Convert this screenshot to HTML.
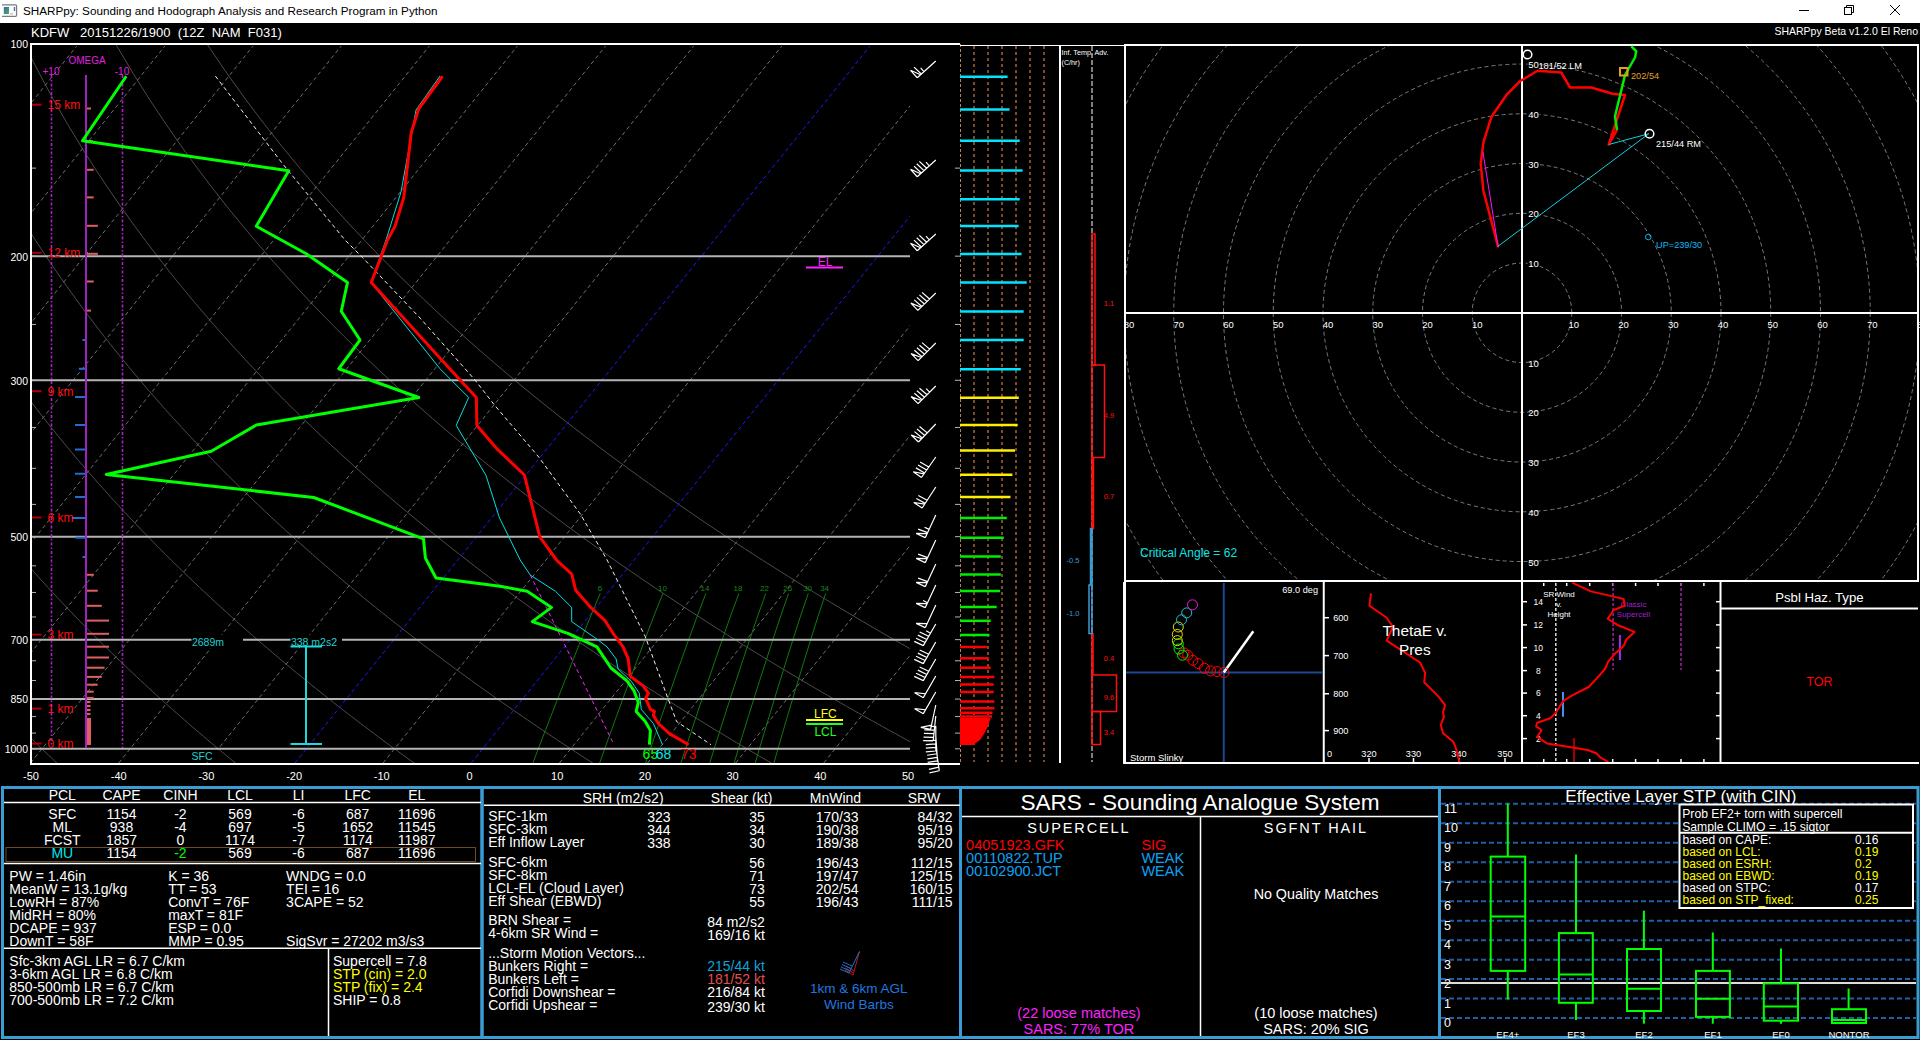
<!DOCTYPE html><html><head><meta charset="utf-8"><style>html,body{margin:0;padding:0;background:#000;overflow:hidden}svg{display:block}text{white-space:pre}</style></head><body><svg width="1920" height="1040" viewBox="0 0 1920 1040" font-family='"Liberation Sans", sans-serif'>
<rect x="0" y="0" width="1920" height="1040" fill="#000" />
<rect x="0" y="0" width="1920" height="23" fill="#ffffff" />
<path d="M16.5,5 V16 M2,4.8 H15.5 Q16.6,4.8 16.6,6 V15.2 Q16.6,16.4 15.5,16.4 H2" fill="none" stroke="#777c82" stroke-width="1.2"/>
<defs><linearGradient id="ig" x1="0" y1="0" x2="1" y2="1"><stop offset="0" stop-color="#3a6aa8"/><stop offset="1" stop-color="#48b060"/></linearGradient></defs>
<rect x="3.8" y="7" width="5.2" height="7" fill="url(#ig)" />
<rect x="10" y="13" width="3" height="1.6" fill="#c8c8c8" />
<rect x="13.8" y="7" width="1.3" height="4" fill="#3a70b0" />
<text x="23" y="15.46" font-size="11.7" fill="#000" text-anchor="start" >SHARPpy: Sounding and Hodograph Analysis and Research Program in Python</text>
<line x1="1799" y1="10.5" x2="1809" y2="10.5" stroke="#000" stroke-width="1" />
<rect x="1844.5" y="7.5" width="7" height="7" fill="none" stroke="#000" stroke-width="1" />
<polyline points="1846.5,7.5 1846.5,5.5 1853.5,5.5 1853.5,12.5 1851.5,12.5" fill="none" stroke="#000" stroke-width="1"/>
<line x1="1890" y1="5" x2="1900" y2="15" stroke="#000" stroke-width="1" />
<line x1="1900" y1="5" x2="1890" y2="15" stroke="#000" stroke-width="1" />
<text x="31" y="36.74" font-size="13" fill="#fff" text-anchor="start" xml:space="preserve">KDFW   20151226/1900  (12Z  NAM  F031)</text>
<text x="1918" y="34.83" font-size="10.5" fill="#fff" text-anchor="end" >SHARPpy Beta v1.2.0 El Reno</text>
<defs><clipPath id="skc"><rect x="31" y="45" width="879" height="718"/></clipPath><clipPath id="hodc"><rect x="1126" y="46" width="792" height="535"/></clipPath></defs>
<g clip-path="url(#skc)">
<polyline points="57.61,763.76 54.52,760.83 51.4,757.87 48.28,754.88 45.14,751.87 41.98,748.82 38.81,745.74 35.62,742.64 32.42,739.5 29.2,736.33 25.96,733.12 22.71,729.88 19.44,726.61 16.15,723.3 12.85,719.95 9.53,716.57 6.19,713.15 2.83,709.69 -0.55,706.19 -3.94,702.65 -7.36,699.07 -10.79,695.45 -14.24,691.79 -17.71,688.08 -21.2,684.32 -24.71,680.52 -28.24,676.67 -31.8,672.77 -35.37,668.82 -38.97,664.82 -42.58,660.76 -46.22,656.65 -49.88,652.49 -53.57,648.27 -57.27,643.99 -61.01,639.64 -64.76,635.24 -68.54,630.77 -72.34,626.24 -76.17,621.63 -80.02,616.96 -83.9,612.21 -87.81,607.39 -91.74,602.49 -95.7,597.52 -99.69,592.46 -103.71,587.31 -107.75,582.08 -111.83,576.76 -115.93,571.34 -120.06,565.82 -124.23,560.21 -128.43,554.49 -132.65,548.65 -136.91,542.71 -141.21,536.65 -145.53,530.46 -149.89,524.15 -154.29,517.71 -158.72,511.13 -163.18,504.4 -167.69,497.52 -172.23,490.48 -176.8,483.28 -181.42,475.9 -186.08,468.34 -190.77,460.59 -195.51,452.64 -200.28,444.48 -205.1,436.09 -209.96,427.47 -214.86,418.6 -219.81,409.46 -224.79,400.04 -229.82,390.32 -234.9,380.29 -240.02,369.91 -245.18,359.17 -250.38,348.03 -255.63,336.48 -260.91,324.48 -266.24,311.98 -271.6,298.95 -277,285.35 -282.43,271.11 -287.88,256.17 -293.35,240.47 -298.84,223.92 -304.33,206.43 -309.8,187.87 -315.24,168.11 -320.63,146.99 -325.94,124.31 -331.11,99.81 -336.1,73.17 -340.83,44" fill="none" stroke="#4c4c4c" stroke-width="1" stroke-linejoin="round" />
<polyline points="236.35,763.76 232.76,760.83 229.16,757.87 225.54,754.88 221.9,751.87 218.24,748.82 214.56,745.74 210.87,742.64 207.15,739.5 203.41,736.33 199.66,733.12 195.88,729.88 192.08,726.61 188.26,723.3 184.42,719.95 180.56,716.57 176.67,713.15 172.77,709.69 168.84,706.19 164.88,702.65 160.91,699.07 156.91,695.45 152.88,691.79 148.83,688.08 144.76,684.32 140.66,680.52 136.54,676.67 132.38,672.77 128.21,668.82 124,664.82 119.77,660.76 115.51,656.65 111.22,652.49 106.9,648.27 102.55,643.99 98.18,639.64 93.77,635.24 89.33,630.77 84.86,626.24 80.36,621.63 75.82,616.96 71.25,612.21 66.65,607.39 62.01,602.49 57.34,597.52 52.63,592.46 47.89,587.31 43.1,582.08 38.28,576.76 33.42,571.34 28.52,565.82 23.58,560.21 18.6,554.49 13.57,548.65 8.5,542.71 3.39,536.65 -1.77,530.46 -6.98,524.15 -12.23,517.71 -17.53,511.13 -22.88,504.4 -28.28,497.52 -33.73,490.48 -39.24,483.28 -44.8,475.9 -50.41,468.34 -56.09,460.59 -61.82,452.64 -67.61,444.48 -73.46,436.09 -79.38,427.47 -85.35,418.6 -91.4,409.46 -97.51,400.04 -103.69,390.32 -109.94,380.29 -116.26,369.91 -122.66,359.17 -129.13,348.03 -135.67,336.48 -142.3,324.48 -149,311.98 -155.78,298.95 -162.64,285.35 -169.58,271.11 -176.59,256.17 -183.69,240.47 -190.85,223.92 -198.09,206.43 -205.39,187.87 -212.74,168.11 -220.13,146.99 -227.54,124.31 -234.94,99.81 -242.29,73.17 -249.53,44" fill="none" stroke="#4c4c4c" stroke-width="1" stroke-linejoin="round" />
<polyline points="415.08,763.76 411.01,760.83 406.91,757.87 402.8,754.88 398.66,751.87 394.5,748.82 390.32,745.74 386.11,742.64 381.88,739.5 377.63,736.33 373.35,733.12 369.05,729.88 364.72,726.61 360.37,723.3 355.99,719.95 351.59,716.57 347.16,713.15 342.7,709.69 338.22,706.19 333.71,702.65 329.17,699.07 324.6,695.45 320,691.79 315.38,688.08 310.72,684.32 306.03,680.52 301.32,676.67 296.57,672.77 291.78,668.82 286.97,664.82 282.12,660.76 277.24,656.65 272.32,652.49 267.37,648.27 262.38,643.99 257.36,639.64 252.3,635.24 247.2,630.77 242.06,626.24 236.89,621.63 231.67,616.96 226.41,612.21 221.11,607.39 215.77,602.49 210.39,597.52 204.96,592.46 199.48,587.31 193.96,582.08 188.39,576.76 182.77,571.34 177.1,565.82 171.39,560.21 165.62,554.49 159.79,548.65 153.91,542.71 147.98,536.65 141.99,530.46 135.94,524.15 129.83,517.71 123.66,511.13 117.43,504.4 111.13,497.52 104.76,490.48 98.33,483.28 91.82,475.9 85.25,468.34 78.6,460.59 71.87,452.64 65.06,444.48 58.18,436.09 51.21,427.47 44.15,418.6 37.01,409.46 29.77,400.04 22.44,390.32 15.02,380.29 7.49,369.91 -0.14,359.17 -7.88,348.03 -15.72,336.48 -23.68,324.48 -31.76,311.98 -39.96,298.95 -48.28,285.35 -56.72,271.11 -65.3,256.17 -74.02,240.47 -82.86,223.92 -91.85,206.43 -100.97,187.87 -110.23,168.11 -119.62,146.99 -129.14,124.31 -138.76,99.81 -148.47,73.17 -158.24,44" fill="none" stroke="#4c4c4c" stroke-width="1" stroke-linejoin="round" />
<polyline points="593.81,763.76 589.25,760.83 584.67,757.87 580.06,754.88 575.42,751.87 570.76,748.82 566.07,745.74 561.36,742.64 556.62,739.5 551.85,736.33 547.05,733.12 542.22,729.88 537.37,726.61 532.48,723.3 527.57,719.95 522.62,716.57 517.65,713.15 512.64,709.69 507.61,706.19 502.54,702.65 497.43,699.07 492.3,695.45 487.13,691.79 481.92,688.08 476.68,684.32 471.41,680.52 466.1,676.67 460.75,672.77 455.36,668.82 449.94,664.82 444.47,660.76 438.97,656.65 433.43,652.49 427.84,648.27 422.21,643.99 416.54,639.64 410.83,635.24 405.07,630.77 399.27,626.24 393.42,621.63 387.52,616.96 381.57,612.21 375.58,607.39 369.53,602.49 363.43,597.52 357.28,592.46 351.08,587.31 344.81,582.08 338.5,576.76 332.12,571.34 325.69,565.82 319.19,560.21 312.64,554.49 306.01,548.65 299.33,542.71 292.57,536.65 285.75,530.46 278.86,524.15 271.89,517.71 264.85,511.13 257.73,504.4 250.53,497.52 243.26,490.48 235.89,483.28 228.45,475.9 220.91,468.34 213.28,460.59 205.56,452.64 197.74,444.48 189.82,436.09 181.79,427.47 173.66,418.6 165.42,409.46 157.06,400.04 148.58,390.32 139.97,380.29 131.24,369.91 122.38,359.17 113.38,348.03 104.23,336.48 94.93,324.48 85.48,311.98 75.87,298.95 66.08,285.35 56.13,271.11 45.99,256.17 35.65,240.47 25.13,223.92 14.39,206.43 3.44,187.87 -7.72,168.11 -19.11,146.99 -30.73,124.31 -42.58,99.81 -54.66,73.17 -66.94,44" fill="none" stroke="#4c4c4c" stroke-width="1" stroke-linejoin="round" />
<polyline points="772.55,763.76 767.5,760.83 762.42,757.87 757.32,754.88 752.18,751.87 747.02,748.82 741.83,745.74 736.6,742.64 731.35,739.5 726.06,736.33 720.74,733.12 715.39,729.88 710.01,726.61 704.59,723.3 699.14,719.95 693.66,716.57 688.14,713.15 682.58,709.69 676.99,706.19 671.36,702.65 665.7,699.07 659.99,695.45 654.25,691.79 648.47,688.08 642.64,684.32 636.78,680.52 630.88,676.67 624.93,672.77 618.94,668.82 612.9,664.82 606.82,660.76 600.7,656.65 594.53,652.49 588.31,648.27 582.04,643.99 575.73,639.64 569.36,635.24 562.94,630.77 556.47,626.24 549.95,621.63 543.37,616.96 536.73,612.21 530.04,607.39 523.29,602.49 516.48,597.52 509.6,592.46 502.67,587.31 495.67,582.08 488.61,576.76 481.47,571.34 474.27,565.82 467,560.21 459.66,554.49 452.24,548.65 444.74,542.71 437.17,536.65 429.51,530.46 421.77,524.15 413.95,517.71 406.04,511.13 398.04,504.4 389.94,497.52 381.75,490.48 373.46,483.28 365.07,475.9 356.57,468.34 347.97,460.59 339.25,452.64 330.41,444.48 321.46,436.09 312.38,427.47 303.17,418.6 293.82,409.46 284.34,400.04 274.71,390.32 264.93,380.29 255,369.91 244.9,359.17 234.63,348.03 224.18,336.48 213.55,324.48 202.72,311.98 191.69,298.95 180.44,285.35 168.98,271.11 157.27,256.17 145.32,240.47 133.11,223.92 120.63,206.43 107.86,187.87 94.78,168.11 81.39,146.99 67.67,124.31 53.59,99.81 39.16,73.17 24.35,44" fill="none" stroke="#4c4c4c" stroke-width="1" stroke-linejoin="round" />
<polyline points="951.28,763.76 945.75,760.83 940.18,757.87 934.58,754.88 928.95,751.87 923.28,748.82 917.58,745.74 911.85,742.64 906.08,739.5 900.28,736.33 894.44,733.12 888.56,729.88 882.65,726.61 876.7,723.3 870.72,719.95 864.69,716.57 858.63,713.15 852.52,709.69 846.37,706.19 840.19,702.65 833.96,699.07 827.69,695.45 821.37,691.79 815.01,688.08 808.61,684.32 802.15,680.52 795.66,676.67 789.11,672.77 782.52,668.82 775.87,664.82 769.18,660.76 762.43,656.65 755.63,652.49 748.78,648.27 741.87,643.99 734.91,639.64 727.89,635.24 720.81,630.77 713.67,626.24 706.48,621.63 699.22,616.96 691.89,612.21 684.5,607.39 677.05,602.49 669.52,597.52 661.93,592.46 654.26,587.31 646.53,582.08 638.71,576.76 630.82,571.34 622.86,565.82 614.81,560.21 606.68,554.49 598.46,548.65 590.15,542.71 581.76,536.65 573.27,530.46 564.69,524.15 556.01,517.71 547.23,511.13 538.34,504.4 529.35,497.52 520.24,490.48 511.03,483.28 501.69,475.9 492.23,468.34 482.65,460.59 472.94,452.64 463.09,444.48 453.1,436.09 442.96,427.47 432.67,418.6 422.23,409.46 411.62,400.04 400.84,390.32 389.89,380.29 378.75,369.91 367.42,359.17 355.88,348.03 344.13,336.48 332.16,324.48 319.96,311.98 307.51,298.95 294.81,285.35 281.83,271.11 268.56,256.17 254.99,240.47 241.1,223.92 226.87,206.43 212.27,187.87 197.29,168.11 181.9,146.99 166.07,124.31 149.77,99.81 132.97,73.17 115.64,44" fill="none" stroke="#4c4c4c" stroke-width="1" stroke-linejoin="round" />
<polyline points="1130.02,763.76 1123.99,760.83 1117.93,757.87 1111.84,754.88 1105.71,751.87 1099.54,748.82 1093.34,745.74 1087.09,742.64 1080.81,739.5 1074.49,736.33 1068.14,733.12 1061.74,729.88 1055.3,726.61 1048.81,723.3 1042.29,719.95 1035.72,716.57 1029.11,713.15 1022.46,709.69 1015.76,706.19 1009.01,702.65 1002.22,699.07 995.38,695.45 988.49,691.79 981.55,688.08 974.57,684.32 967.53,680.52 960.44,676.67 953.29,672.77 946.09,668.82 938.84,664.82 931.53,660.76 924.16,656.65 916.74,652.49 909.25,648.27 901.7,643.99 894.09,639.64 886.42,635.24 878.68,630.77 870.88,626.24 863,621.63 855.06,616.96 847.05,612.21 838.96,607.39 830.8,602.49 822.57,597.52 814.25,592.46 805.86,587.31 797.38,582.08 788.82,576.76 780.18,571.34 771.44,565.82 762.61,560.21 753.7,554.49 744.68,548.65 735.57,542.71 726.35,536.65 717.03,530.46 707.6,524.15 698.07,517.71 688.42,511.13 678.65,504.4 668.76,497.52 658.74,490.48 648.59,483.28 638.31,475.9 627.9,468.34 617.33,460.59 606.62,452.64 595.76,444.48 584.73,436.09 573.54,427.47 562.18,418.6 550.64,409.46 538.9,400.04 526.98,390.32 514.85,380.29 502.5,369.91 489.93,359.17 477.13,348.03 464.08,336.48 450.78,324.48 437.2,311.98 423.33,298.95 409.17,285.35 394.68,271.11 379.85,256.17 364.66,240.47 349.09,223.92 333.11,206.43 316.69,187.87 299.8,168.11 282.41,146.99 264.47,124.31 245.94,99.81 226.78,73.17 206.94,44" fill="none" stroke="#4c4c4c" stroke-width="1" stroke-linejoin="round" />
<line x1="-938.82" y1="763" x2="-363.86" y2="46" stroke="#6e6e6e" stroke-width="1" stroke-dasharray="4,3" />
<line x1="-850.69" y1="763" x2="-275.73" y2="46" stroke="#6e6e6e" stroke-width="1" stroke-dasharray="4,3" />
<line x1="-762.56" y1="763" x2="-187.6" y2="46" stroke="#6e6e6e" stroke-width="1" stroke-dasharray="4,3" />
<line x1="-674.43" y1="763" x2="-99.47" y2="46" stroke="#6e6e6e" stroke-width="1" stroke-dasharray="4,3" />
<line x1="-586.3" y1="763" x2="-11.34" y2="46" stroke="#6e6e6e" stroke-width="1" stroke-dasharray="4,3" />
<line x1="-498.17" y1="763" x2="76.79" y2="46" stroke="#6e6e6e" stroke-width="1" stroke-dasharray="4,3" />
<line x1="-410.04" y1="763" x2="164.92" y2="46" stroke="#6e6e6e" stroke-width="1" stroke-dasharray="4,3" />
<line x1="-321.91" y1="763" x2="253.05" y2="46" stroke="#6e6e6e" stroke-width="1" stroke-dasharray="4,3" />
<line x1="-233.78" y1="763" x2="341.18" y2="46" stroke="#6e6e6e" stroke-width="1" stroke-dasharray="4,3" />
<line x1="-145.65" y1="763" x2="429.31" y2="46" stroke="#6e6e6e" stroke-width="1" stroke-dasharray="4,3" />
<line x1="-57.52" y1="763" x2="517.44" y2="46" stroke="#6e6e6e" stroke-width="1" stroke-dasharray="4,3" />
<line x1="30.61" y1="763" x2="605.57" y2="46" stroke="#6e6e6e" stroke-width="1" stroke-dasharray="4,3" />
<line x1="118.74" y1="763" x2="693.7" y2="46" stroke="#6e6e6e" stroke-width="1" stroke-dasharray="4,3" />
<line x1="206.87" y1="763" x2="781.83" y2="46" stroke="#6e6e6e" stroke-width="1" stroke-dasharray="4,3" />
<line x1="295" y1="763" x2="869.96" y2="46" stroke="#1a1aff" stroke-width="1" stroke-dasharray="4,3" />
<line x1="383.13" y1="763" x2="958.09" y2="46" stroke="#6e6e6e" stroke-width="1" stroke-dasharray="4,3" />
<line x1="471.26" y1="763" x2="1046.22" y2="46" stroke="#1a1aff" stroke-width="1" stroke-dasharray="4,3" />
<line x1="559.39" y1="763" x2="1134.35" y2="46" stroke="#6e6e6e" stroke-width="1" stroke-dasharray="4,3" />
<line x1="647.52" y1="763" x2="1222.48" y2="46" stroke="#6e6e6e" stroke-width="1" stroke-dasharray="4,3" />
<line x1="735.65" y1="763" x2="1310.61" y2="46" stroke="#6e6e6e" stroke-width="1" stroke-dasharray="4,3" />
<line x1="823.78" y1="763" x2="1398.74" y2="46" stroke="#6e6e6e" stroke-width="1" stroke-dasharray="4,3" />
<line x1="911.91" y1="763" x2="1486.87" y2="46" stroke="#6e6e6e" stroke-width="1" stroke-dasharray="4,3" />
<polyline points="600.26,593.46 590.31,616.96 581.17,639.64 572.74,660.76 564.91,680.52 557.6,699.07 550.77,716.57 544.34,733.12 538.29,748.82 532.57,763.76" fill="none" stroke="#0f7a0f" stroke-width="1" stroke-linejoin="round" />
<polyline points="662.87,593.46 653.49,616.96 644.9,639.64 636.97,660.76 629.62,680.52 622.78,699.07 616.38,716.57 610.38,733.12 604.72,748.82 599.39,763.76" fill="none" stroke="#0f7a0f" stroke-width="1" stroke-linejoin="round" />
<polyline points="705.87,593.46 696.9,616.96 688.68,639.64 681.12,660.76 674.11,680.52 667.59,699.07 661.5,716.57 655.79,733.12 650.42,748.82 645.35,763.76" fill="none" stroke="#0f7a0f" stroke-width="1" stroke-linejoin="round" />
<polyline points="738.88,593.46 730.23,616.96 722.31,639.64 715.03,660.76 708.28,680.52 702.02,699.07 696.17,716.57 690.69,733.12 685.54,748.82 680.68,763.76" fill="none" stroke="#0f7a0f" stroke-width="1" stroke-linejoin="round" />
<polyline points="765.78,593.46 757.39,616.96 749.72,639.64 742.66,660.76 736.14,680.52 730.08,699.07 724.43,716.57 719.14,733.12 714.17,748.82 709.49,763.76" fill="none" stroke="#0f7a0f" stroke-width="1" stroke-linejoin="round" />
<polyline points="788.51,593.46 780.35,616.96 772.89,639.64 766.03,660.76 759.7,680.52 753.82,699.07 748.34,716.57 743.21,733.12 738.4,748.82 733.86,763.76" fill="none" stroke="#0f7a0f" stroke-width="1" stroke-linejoin="round" />
<polyline points="808.22,593.46 800.25,616.96 792.98,639.64 786.3,660.76 780.13,680.52 774.4,699.07 769.07,716.57 764.09,733.12 759.41,748.82 755.01,763.76" fill="none" stroke="#0f7a0f" stroke-width="1" stroke-linejoin="round" />
<polyline points="825.63,593.46 817.84,616.96 810.73,639.64 804.2,660.76 798.18,680.52 792.59,699.07 787.39,716.57 782.53,733.12 777.98,748.82 773.7,763.76" fill="none" stroke="#0f7a0f" stroke-width="1" stroke-linejoin="round" />
</g>
<text x="599.9" y="591.22" font-size="8" fill="#138a13" text-anchor="middle" >6</text>
<text x="662.5" y="591.22" font-size="8" fill="#138a13" text-anchor="middle" >10</text>
<text x="704.9" y="591.22" font-size="8" fill="#138a13" text-anchor="middle" >14</text>
<text x="737.9" y="591.22" font-size="8" fill="#138a13" text-anchor="middle" >18</text>
<text x="764.5" y="591.22" font-size="8" fill="#138a13" text-anchor="middle" >22</text>
<text x="787.7" y="591.22" font-size="8" fill="#138a13" text-anchor="middle" >26</text>
<text x="807.6" y="591.22" font-size="8" fill="#138a13" text-anchor="middle" >30</text>
<text x="824.6" y="591.22" font-size="8" fill="#138a13" text-anchor="middle" >34</text>
<line x1="31" y1="256.17" x2="910" y2="256.17" stroke="#b4b4b4" stroke-width="2" />
<line x1="31" y1="380.29" x2="910" y2="380.29" stroke="#b4b4b4" stroke-width="2" />
<line x1="31" y1="536.65" x2="910" y2="536.65" stroke="#b4b4b4" stroke-width="2" />
<line x1="31" y1="639.64" x2="910" y2="639.64" stroke="#b4b4b4" stroke-width="2" />
<line x1="31" y1="699.07" x2="910" y2="699.07" stroke="#b4b4b4" stroke-width="2" />
<line x1="31" y1="748.82" x2="910" y2="748.82" stroke="#b4b4b4" stroke-width="2" />
<line x1="31" y1="44" x2="36" y2="44" stroke="#b4b4b4" stroke-width="1" />
<line x1="955" y1="44" x2="960" y2="44" stroke="#b4b4b4" stroke-width="1" />
<line x1="31" y1="168.11" x2="36" y2="168.11" stroke="#b4b4b4" stroke-width="1" />
<line x1="955" y1="168.11" x2="960" y2="168.11" stroke="#b4b4b4" stroke-width="1" />
<line x1="31" y1="256.17" x2="36" y2="256.17" stroke="#b4b4b4" stroke-width="1" />
<line x1="955" y1="256.17" x2="960" y2="256.17" stroke="#b4b4b4" stroke-width="1" />
<line x1="31" y1="324.48" x2="36" y2="324.48" stroke="#b4b4b4" stroke-width="1" />
<line x1="955" y1="324.48" x2="960" y2="324.48" stroke="#b4b4b4" stroke-width="1" />
<line x1="31" y1="380.29" x2="36" y2="380.29" stroke="#b4b4b4" stroke-width="1" />
<line x1="955" y1="380.29" x2="960" y2="380.29" stroke="#b4b4b4" stroke-width="1" />
<line x1="31" y1="427.47" x2="36" y2="427.47" stroke="#b4b4b4" stroke-width="1" />
<line x1="955" y1="427.47" x2="960" y2="427.47" stroke="#b4b4b4" stroke-width="1" />
<line x1="31" y1="468.34" x2="36" y2="468.34" stroke="#b4b4b4" stroke-width="1" />
<line x1="955" y1="468.34" x2="960" y2="468.34" stroke="#b4b4b4" stroke-width="1" />
<line x1="31" y1="504.4" x2="36" y2="504.4" stroke="#b4b4b4" stroke-width="1" />
<line x1="955" y1="504.4" x2="960" y2="504.4" stroke="#b4b4b4" stroke-width="1" />
<line x1="31" y1="536.65" x2="36" y2="536.65" stroke="#b4b4b4" stroke-width="1" />
<line x1="955" y1="536.65" x2="960" y2="536.65" stroke="#b4b4b4" stroke-width="1" />
<line x1="31" y1="565.82" x2="36" y2="565.82" stroke="#b4b4b4" stroke-width="1" />
<line x1="955" y1="565.82" x2="960" y2="565.82" stroke="#b4b4b4" stroke-width="1" />
<line x1="31" y1="592.46" x2="36" y2="592.46" stroke="#b4b4b4" stroke-width="1" />
<line x1="955" y1="592.46" x2="960" y2="592.46" stroke="#b4b4b4" stroke-width="1" />
<line x1="31" y1="616.96" x2="36" y2="616.96" stroke="#b4b4b4" stroke-width="1" />
<line x1="955" y1="616.96" x2="960" y2="616.96" stroke="#b4b4b4" stroke-width="1" />
<line x1="31" y1="639.64" x2="36" y2="639.64" stroke="#b4b4b4" stroke-width="1" />
<line x1="955" y1="639.64" x2="960" y2="639.64" stroke="#b4b4b4" stroke-width="1" />
<line x1="31" y1="660.76" x2="36" y2="660.76" stroke="#b4b4b4" stroke-width="1" />
<line x1="955" y1="660.76" x2="960" y2="660.76" stroke="#b4b4b4" stroke-width="1" />
<line x1="31" y1="680.52" x2="36" y2="680.52" stroke="#b4b4b4" stroke-width="1" />
<line x1="955" y1="680.52" x2="960" y2="680.52" stroke="#b4b4b4" stroke-width="1" />
<line x1="31" y1="699.07" x2="36" y2="699.07" stroke="#b4b4b4" stroke-width="1" />
<line x1="955" y1="699.07" x2="960" y2="699.07" stroke="#b4b4b4" stroke-width="1" />
<line x1="31" y1="716.57" x2="36" y2="716.57" stroke="#b4b4b4" stroke-width="1" />
<line x1="955" y1="716.57" x2="960" y2="716.57" stroke="#b4b4b4" stroke-width="1" />
<line x1="31" y1="733.12" x2="36" y2="733.12" stroke="#b4b4b4" stroke-width="1" />
<line x1="955" y1="733.12" x2="960" y2="733.12" stroke="#b4b4b4" stroke-width="1" />
<line x1="31" y1="748.82" x2="36" y2="748.82" stroke="#b4b4b4" stroke-width="1" />
<line x1="955" y1="748.82" x2="960" y2="748.82" stroke="#b4b4b4" stroke-width="1" />
<line x1="31" y1="763.76" x2="36" y2="763.76" stroke="#b4b4b4" stroke-width="1" />
<line x1="955" y1="763.76" x2="960" y2="763.76" stroke="#b4b4b4" stroke-width="1" />
<polyline points="960,44 31,44 31,764 960,764" fill="none" stroke="#fff" stroke-width="2"/>
<text x="28" y="48.33" font-size="10.5" fill="#fff" text-anchor="end" >100</text>
<text x="28" y="260.5" font-size="10.5" fill="#fff" text-anchor="end" >200</text>
<text x="28" y="384.61" font-size="10.5" fill="#fff" text-anchor="end" >300</text>
<text x="28" y="540.98" font-size="10.5" fill="#fff" text-anchor="end" >500</text>
<text x="28" y="643.97" font-size="10.5" fill="#fff" text-anchor="end" >700</text>
<text x="28" y="703.4" font-size="10.5" fill="#fff" text-anchor="end" >850</text>
<text x="28" y="753.15" font-size="10.5" fill="#fff" text-anchor="end" >1000</text>
<text x="31" y="780.01" font-size="11" fill="#fff" text-anchor="middle" >-50</text>
<text x="118.7" y="780.01" font-size="11" fill="#fff" text-anchor="middle" >-40</text>
<text x="206.4" y="780.01" font-size="11" fill="#fff" text-anchor="middle" >-30</text>
<text x="294.1" y="780.01" font-size="11" fill="#fff" text-anchor="middle" >-20</text>
<text x="381.8" y="780.01" font-size="11" fill="#fff" text-anchor="middle" >-10</text>
<text x="469.5" y="780.01" font-size="11" fill="#fff" text-anchor="middle" >0</text>
<text x="557.2" y="780.01" font-size="11" fill="#fff" text-anchor="middle" >10</text>
<text x="644.9" y="780.01" font-size="11" fill="#fff" text-anchor="middle" >20</text>
<text x="732.6" y="780.01" font-size="11" fill="#fff" text-anchor="middle" >30</text>
<text x="820.3" y="780.01" font-size="11" fill="#fff" text-anchor="middle" >40</text>
<text x="908" y="780.01" font-size="11" fill="#fff" text-anchor="middle" >50</text>
<line x1="86" y1="75" x2="86" y2="748" stroke="#a020c0" stroke-width="2" />
<line x1="51.5" y1="75" x2="51.5" y2="748" stroke="#b020c8" stroke-width="1.6" stroke-dasharray="3,2,1.5,2" />
<line x1="122.5" y1="75" x2="122.5" y2="748" stroke="#b020c8" stroke-width="1.6" stroke-dasharray="3,2,1.5,2" />
<text x="87" y="63.65" font-size="10" fill="#e020e0" text-anchor="middle" >OMEGA</text>
<text x="51" y="75.14" font-size="10" fill="#e020e0" text-anchor="middle" >+10</text>
<text x="122" y="75.14" font-size="10" fill="#e020e0" text-anchor="middle" >-10</text>
<line x1="87" y1="108.5" x2="91" y2="108.5" stroke="#e06060" stroke-width="2" />
<line x1="87" y1="141" x2="92.7" y2="141" stroke="#e06060" stroke-width="2" />
<line x1="87" y1="169.8" x2="93.7" y2="169.8" stroke="#e06060" stroke-width="2" />
<line x1="87" y1="197.4" x2="93.7" y2="197.4" stroke="#e06060" stroke-width="2" />
<line x1="87" y1="225.8" x2="97.9" y2="225.8" stroke="#e06060" stroke-width="2" />
<line x1="87" y1="253.8" x2="97.9" y2="253.8" stroke="#e06060" stroke-width="2" />
<line x1="87" y1="281.5" x2="93.7" y2="281.5" stroke="#e06060" stroke-width="2" />
<line x1="87" y1="310.6" x2="91" y2="310.6" stroke="#e06060" stroke-width="2" />
<line x1="87" y1="574.8" x2="93.7" y2="574.8" stroke="#e06060" stroke-width="2" />
<line x1="87" y1="590.7" x2="97.7" y2="590.7" stroke="#e06060" stroke-width="2" />
<line x1="87" y1="605.8" x2="101.8" y2="605.8" stroke="#e06060" stroke-width="2" />
<line x1="87" y1="620.6" x2="109" y2="620.6" stroke="#e06060" stroke-width="2" />
<line x1="87" y1="633.8" x2="109" y2="633.8" stroke="#e06060" stroke-width="2" />
<line x1="87" y1="646.7" x2="109" y2="646.7" stroke="#e06060" stroke-width="2" />
<line x1="87" y1="657.5" x2="109" y2="657.5" stroke="#e06060" stroke-width="2" />
<line x1="87" y1="667.7" x2="104.5" y2="667.7" stroke="#e06060" stroke-width="2" />
<line x1="87" y1="676.9" x2="101.8" y2="676.9" stroke="#e06060" stroke-width="2" />
<line x1="87" y1="684.7" x2="97.7" y2="684.7" stroke="#e06060" stroke-width="2" />
<line x1="87" y1="691.7" x2="93.7" y2="691.7" stroke="#e06060" stroke-width="2" />
<line x1="87" y1="697.9" x2="93.7" y2="697.9" stroke="#e06060" stroke-width="2" />
<line x1="87" y1="702" x2="90.5" y2="702" stroke="#e06060" stroke-width="2" />
<line x1="87" y1="706" x2="90.5" y2="706" stroke="#e06060" stroke-width="2" />
<line x1="87" y1="710" x2="90.5" y2="710" stroke="#e06060" stroke-width="2" />
<line x1="87" y1="714" x2="90.5" y2="714" stroke="#e06060" stroke-width="2" />
<rect x="87" y="718" width="4" height="27" fill="#e06060" />
<line x1="82.5" y1="340" x2="85" y2="340" stroke="#1e6fd0" stroke-width="2" />
<line x1="78.75" y1="368.75" x2="85" y2="368.75" stroke="#1e6fd0" stroke-width="2" />
<line x1="75" y1="397" x2="85" y2="397" stroke="#1e6fd0" stroke-width="2" />
<line x1="75" y1="425" x2="85" y2="425" stroke="#1e6fd0" stroke-width="2" />
<line x1="75" y1="449.5" x2="85" y2="449.5" stroke="#1e6fd0" stroke-width="2" />
<line x1="75" y1="473.75" x2="85" y2="473.75" stroke="#1e6fd0" stroke-width="2" />
<line x1="75" y1="497" x2="85" y2="497" stroke="#1e6fd0" stroke-width="2" />
<line x1="72" y1="518" x2="85" y2="518" stroke="#1e6fd0" stroke-width="2" />
<line x1="75.4" y1="537.7" x2="85" y2="537.7" stroke="#1e6fd0" stroke-width="2" />
<line x1="82.5" y1="557" x2="85" y2="557" stroke="#1e6fd0" stroke-width="2" />
<line x1="32" y1="104.7" x2="41.5" y2="104.7" stroke="#b00000" stroke-width="2" />
<text x="47.5" y="109.07" font-size="12" fill="#ff1010" text-anchor="start" >15 km</text>
<line x1="32" y1="252.8" x2="41.5" y2="252.8" stroke="#b00000" stroke-width="2" />
<text x="47.5" y="257.17" font-size="12" fill="#ff1010" text-anchor="start" >12 km</text>
<line x1="32" y1="391.2" x2="41.5" y2="391.2" stroke="#b00000" stroke-width="2" />
<text x="47.5" y="395.57" font-size="12" fill="#ff1010" text-anchor="start" >9 km</text>
<line x1="32" y1="517.5" x2="41.5" y2="517.5" stroke="#b00000" stroke-width="2" />
<text x="47.5" y="521.87" font-size="12" fill="#ff1010" text-anchor="start" >6 km</text>
<line x1="32" y1="634.6" x2="41.5" y2="634.6" stroke="#b00000" stroke-width="2" />
<text x="47.5" y="638.97" font-size="12" fill="#ff1010" text-anchor="start" >3 km</text>
<line x1="32" y1="708.6" x2="41.5" y2="708.6" stroke="#b00000" stroke-width="2" />
<text x="47.5" y="712.97" font-size="12" fill="#ff1010" text-anchor="start" >1 km</text>
<line x1="32" y1="743.6" x2="41.5" y2="743.6" stroke="#b00000" stroke-width="2" />
<text x="47.5" y="747.97" font-size="12" fill="#ff1010" text-anchor="start" >0 km</text>
<rect x="191.5" y="635" width="51.5" height="13" fill="#000" />
<rect x="290.5" y="635" width="51.5" height="11" fill="#000" />
<rect x="191.5" y="750" width="26.5" height="12" fill="#000" />
<text x="208" y="645.83" font-size="10.5" fill="#20d0d0" text-anchor="middle" >2689m</text>
<text x="314" y="645.83" font-size="10.5" fill="#20d0d0" text-anchor="middle" >338 m2s2</text>
<line x1="306" y1="646" x2="306" y2="744" stroke="#20d8d8" stroke-width="2" />
<line x1="290.5" y1="646.5" x2="322" y2="646.5" stroke="#20d8d8" stroke-width="2" />
<line x1="290.5" y1="744" x2="322" y2="744" stroke="#20d8d8" stroke-width="2" />
<text x="202" y="759.83" font-size="10.5" fill="#20d0d0" text-anchor="middle" >SFC</text>
<text x="825" y="266.37" font-size="12" fill="#ff20ff" text-anchor="middle" >EL</text>
<line x1="806" y1="267.5" x2="843" y2="267.5" stroke="#ff20ff" stroke-width="2" />
<text x="825.4" y="718.37" font-size="12" fill="#ffff20" text-anchor="middle" >LFC</text>
<line x1="806" y1="720" x2="843" y2="720" stroke="#ffff00" stroke-width="2" />
<line x1="806" y1="724" x2="843" y2="724" stroke="#20ff20" stroke-width="2" />
<text x="825.4" y="735.87" font-size="12" fill="#20ff20" text-anchor="middle" >LCL</text>
<polyline points="215.4,76.1 282,163 345,240 362.5,257.5 420,318 475,380 494.6,405.2 538.8,457.1 580.2,513.8 607.1,560 645.3,636.7 667.5,697.3 676.6,721.5 711,744.7" fill="none" stroke="#f0f0f0" stroke-width="1" stroke-linejoin="round" stroke-dasharray="4,3" />
<polyline points="530.3,575.1 614,744.7" fill="none" stroke="#ff20ff" stroke-width="1" stroke-linejoin="round" stroke-dasharray="4,3" />
<polyline points="440,76 416,110 401,192 386,240 371,282.5 440,368.75 468.7,397.5 456.2,425.4 486,475.4 499.4,517.7 520.2,560 530.3,575.1 555.5,591.3 571.7,607.4 571.7,621.6 594.9,637.7 607,646.8 616.1,658.9 618.1,669 631.2,681.1 639.3,693.2 641.3,709.4 653.4,723.5 662.5,744.7" fill="none" stroke="#00e0e0" stroke-width="1" stroke-linejoin="round" />
<polyline points="126.25,76.25 82.5,140.75 288.75,170.75 256.25,226.25 306.25,253.75 347.5,282.5 341.25,311.25 360,340 338.75,368.75 418.75,397.5 256.25,425 211.25,451.25 106.25,474.5 313.75,497.5 423.5,538.8 425.4,558 436,578 500,586.2 527.2,591.3 551.5,607.4 532.3,621.6 568.6,633.7 596.9,646.8 611,668 627.2,681.1 634.2,691.2 638.3,702.3 636.2,711.4 645.3,721.5 650.4,730.6 649.4,744.7" fill="none" stroke="#00ff00" stroke-width="3" stroke-linejoin="round" />
<polyline points="442.5,76.25 418.75,108.75 411.25,132.5 403.75,197.5 395,226.25 387.5,240 371.25,282.5 441.7,360 476.3,397.5 476.9,425.4 497.5,449.4 524.4,475 539.8,536.9 556.5,560 571.7,574.1 575.7,590.3 590.8,607.4 605,620.6 614,634.7 623.1,646.8 628.2,658.9 630.2,676.1 643.3,686.1 648.3,693.2 645.7,698.3 650.4,709.4 654.4,711.4 653.4,715.4 658.4,723.5 669.5,733.6 688.7,744.7" fill="none" stroke="#ff0000" stroke-width="3" stroke-linejoin="round" />
<text x="650.4" y="759.3" font-size="14" fill="#00ff00" text-anchor="middle" >65</text>
<text x="663.5" y="759.3" font-size="14" fill="#00e8e8" text-anchor="middle" >68</text>
<text x="688.7" y="759.3" font-size="14" fill="#ff0000" text-anchor="middle" >73</text>
<path d="M935.8,61L917.22,77.73M917.22,77.73L910.53,70.3L920.57,74.72M921.31,74.05L914.02,67.15M923.98,71.64L920.64,67.92M935.8,160L917.22,176.73M917.22,176.73L910.53,169.3L920.57,173.72M921.31,173.05L914.02,166.15M923.98,170.64L916.7,163.74M926.66,168.23L919.37,161.33M929.33,165.82L925.99,162.11M935.8,234L917.22,250.73M917.22,250.73L910.53,243.3L920.57,247.72M921.31,247.05L914.02,240.15M923.98,244.64L916.7,237.74M926.66,242.23L919.37,235.33M929.33,239.82L925.99,236.11M935.8,293L917.82,310.37M917.82,310.37L910.87,303.17L921.05,307.24M921.77,306.55L914.25,299.91M924.36,304.05L916.84,297.41M926.95,301.54L919.43,294.91M929.54,299.04L922.02,292.41M935.8,343L918.12,360.68M918.12,360.68L911.05,353.61L921.3,357.5M922.01,356.79L914.37,350.28M924.56,354.24L916.92,347.74M927.1,351.7L919.47,345.19M929.65,349.15L922.01,342.65M935.8,386L918.12,403.68M918.12,403.68L911.05,396.61L921.3,400.5M922.01,399.79L914.37,393.28M924.56,397.24L916.92,390.74M927.1,394.7L919.47,388.19M929.65,392.15L926.11,388.62M935.8,424L918.43,441.98M918.43,441.98L911.24,435.04L921.56,438.75M922.25,438.03L914.51,431.66M924.75,435.44L917.01,429.07M927.26,432.85L919.51,426.48M935.8,457L921.46,477.48M921.46,477.48L913.27,471.74L924.04,473.79M924.62,472.97L915.96,467.89M926.68,470.02L918.03,464.94M928.75,467.08L920.09,462M935.8,487L922.18,507.97M922.18,507.97L913.8,502.52L924.63,504.19M925.18,503.35L916.36,498.58M927.14,500.33L918.32,495.56M935.8,515L925.23,537.66M925.23,537.66L916.17,533.43L927.14,533.58M927.56,532.67L918.16,529.17M929.08,529.41L924.55,527.3M935.8,540L925.23,562.66M925.23,562.66L916.17,558.43L927.14,558.58M927.56,557.67L918.16,554.17M935.8,564L925.23,586.66M925.23,586.66L916.17,582.43L927.14,582.58M927.56,581.67L918.16,578.17M935.8,585L925.23,607.66M925.23,607.66L916.17,603.43L927.14,603.58M927.56,602.67L923.03,600.56M935.8,605L925.23,627.66M925.23,627.66L916.17,623.43L927.14,623.58M935.8,624L923.3,645.65M923.3,645.65L914.24,641.34M925.1,642.53L916.04,638.23M926.9,639.42L917.84,635.11M928.7,636.3L919.64,631.99M930.5,633.18L926.17,630.68M935.8,642L923.3,663.65M923.3,663.65L914.24,659.34M925.1,660.53L916.04,656.23M926.9,657.42L917.84,653.11M928.7,654.3L919.64,649.99M935.8,659L923.3,680.65M923.3,680.65L914.24,676.34M925.1,677.53L916.04,673.23M926.9,674.42L917.84,670.11M928.7,671.3L919.64,666.99M935.8,676L923.3,697.65M923.3,697.65L914.64,692.65L925.55,693.75M935.8,692L923.3,713.65M923.3,713.65L914.64,708.65L925.55,709.75M935.8,705L930.6,729.45M930.6,729.45L920.82,727.37L931.54,725.05M935.8,716L933.19,740.86M933.19,740.86L923.16,740.61M933.56,737.28L923.53,737.03M933.94,733.7L923.91,733.45M934.32,730.12L924.29,729.87M934.69,726.54L929.72,726.02M935.8,726L935.8,751M935.8,751L925.8,751.8M935.8,747.4L925.8,748.2M935.8,743.8L925.8,744.6M935.8,740.2L925.8,741M935.8,736L937.54,760.94M937.54,760.94L927.62,762.43M937.29,757.35L927.37,758.84M937.04,753.76L927.12,755.25M935.8,746L939.28,770.76M939.28,770.76L929.49,772.94M938.78,767.19L928.99,769.38" fill="none" stroke="#ffffff" stroke-width="1.2"/>
<line x1="974" y1="46" x2="974" y2="762" stroke="#7a4a2a" stroke-width="2" stroke-dasharray="3,3" />
<line x1="988" y1="46" x2="988" y2="762" stroke="#7a4a2a" stroke-width="2" stroke-dasharray="3,3" />
<line x1="1002" y1="46" x2="1002" y2="762" stroke="#7a4a2a" stroke-width="2" stroke-dasharray="3,3" />
<line x1="1016" y1="46" x2="1016" y2="762" stroke="#7a4a2a" stroke-width="2" stroke-dasharray="3,3" />
<line x1="1030" y1="46" x2="1030" y2="762" stroke="#7a4a2a" stroke-width="2" stroke-dasharray="3,3" />
<line x1="1044" y1="46" x2="1044" y2="762" stroke="#7a4a2a" stroke-width="2" stroke-dasharray="3,3" />
<line x1="960.5" y1="44" x2="960.5" y2="763" stroke="#b08060" stroke-width="1" stroke-dasharray="3,2" />
<line x1="960" y1="76.7" x2="1007.6" y2="76.7" stroke="#00e5ff" stroke-width="2.5" />
<line x1="960" y1="109.6" x2="1009.5" y2="109.6" stroke="#00e5ff" stroke-width="2.5" />
<line x1="960" y1="140.7" x2="1019.7" y2="140.7" stroke="#00e5ff" stroke-width="2.5" />
<line x1="960" y1="170.6" x2="1022.6" y2="170.6" stroke="#00e5ff" stroke-width="2.5" />
<line x1="960" y1="199.2" x2="1019.7" y2="199.2" stroke="#00e5ff" stroke-width="2.5" />
<line x1="960" y1="225.9" x2="1018.6" y2="225.9" stroke="#00e5ff" stroke-width="2.5" />
<line x1="960" y1="254" x2="1021.5" y2="254" stroke="#00e5ff" stroke-width="2.5" />
<line x1="960" y1="282.5" x2="1026.7" y2="282.5" stroke="#00e5ff" stroke-width="2.5" />
<line x1="960" y1="311.4" x2="1023.7" y2="311.4" stroke="#00e5ff" stroke-width="2.5" />
<line x1="960" y1="340" x2="1023.7" y2="340" stroke="#00e5ff" stroke-width="2.5" />
<line x1="960" y1="369.2" x2="1020.8" y2="369.2" stroke="#00e5ff" stroke-width="2.5" />
<line x1="960" y1="397.8" x2="1018.8" y2="397.8" stroke="#ffee00" stroke-width="2.5" />
<line x1="960" y1="424.9" x2="1017.7" y2="424.9" stroke="#ffee00" stroke-width="2.5" />
<line x1="960" y1="450.4" x2="1015" y2="450.4" stroke="#ffee00" stroke-width="2.5" />
<line x1="960" y1="474.8" x2="1012.4" y2="474.8" stroke="#ffee00" stroke-width="2.5" />
<line x1="960" y1="496.9" x2="1010.5" y2="496.9" stroke="#ffee00" stroke-width="2.5" />
<line x1="960" y1="518" x2="1006.8" y2="518" stroke="#00ee00" stroke-width="2.5" />
<line x1="960" y1="537.8" x2="1003.8" y2="537.8" stroke="#00ee00" stroke-width="2.5" />
<line x1="960" y1="556.6" x2="1000.8" y2="556.6" stroke="#00ee00" stroke-width="2.5" />
<line x1="960" y1="574.6" x2="1000.8" y2="574.6" stroke="#00ee00" stroke-width="2.5" />
<line x1="960" y1="591.1" x2="1000" y2="591.1" stroke="#00ee00" stroke-width="2.5" />
<line x1="960" y1="606.9" x2="996.7" y2="606.9" stroke="#00ee00" stroke-width="2.5" />
<line x1="960" y1="620.8" x2="990.7" y2="620.8" stroke="#00ee00" stroke-width="2.5" />
<line x1="960" y1="635" x2="989.5" y2="635" stroke="#00ee00" stroke-width="2.5" />
<line x1="960" y1="647" x2="986.9" y2="647" stroke="#ff0000" stroke-width="2.5" />
<line x1="960" y1="658.3" x2="988.8" y2="658.3" stroke="#ff0000" stroke-width="2.5" />
<line x1="960" y1="667.7" x2="990.7" y2="667.7" stroke="#ff0000" stroke-width="2.5" />
<line x1="960" y1="677" x2="994.4" y2="677" stroke="#ff0000" stroke-width="2.5" />
<line x1="960" y1="684.6" x2="993.7" y2="684.6" stroke="#ff0000" stroke-width="2.5" />
<line x1="960" y1="692" x2="993.7" y2="692" stroke="#ff0000" stroke-width="2.5" />
<line x1="960" y1="701.4" x2="994.4" y2="701.4" stroke="#ff0000" stroke-width="2.5" />
<line x1="960" y1="708.2" x2="994.4" y2="708.2" stroke="#ff0000" stroke-width="2.5" />
<line x1="960" y1="712.7" x2="992.5" y2="712.7" stroke="#ff0000" stroke-width="2.5" />
<line x1="960" y1="716.5" x2="992" y2="716.5" stroke="#ff0000" stroke-width="2.5" />
<path d="M960,718 L990.5,718 L988,726 L984,734 L980,740 L973,745 L960,745 Z" fill="#ff0000"/>
<line x1="1060" y1="45" x2="1060" y2="763" stroke="#fff" stroke-width="2" />
<line x1="960" y1="45.5" x2="1125" y2="45.5" stroke="#fff" stroke-width="1" />
<text x="1061.5" y="54.82" font-size="7.2" fill="#fff" text-anchor="start" >Inf. Temp. Adv.</text>
<text x="1061.5" y="64.62" font-size="7.2" fill="#fff" text-anchor="start" >(C/hr)</text>
<line x1="1092" y1="46" x2="1092" y2="762" stroke="#aaaaaa" stroke-width="1.5" stroke-dasharray="5,2" />
<rect x="1092" y="234" width="3" height="131" fill="none" stroke="#ff1010" stroke-width="1.5" />
<rect x="1092" y="365" width="12.5" height="92.5" fill="none" stroke="#ff1010" stroke-width="1.5" />
<rect x="1092" y="457.5" width="1.5" height="71" fill="none" stroke="#ff1010" stroke-width="1.5" />
<rect x="1092" y="633.5" width="1" height="41.5" fill="none" stroke="#ff1010" stroke-width="1.5" />
<rect x="1092" y="675" width="24.5" height="36.5" fill="none" stroke="#ff1010" stroke-width="1.5" />
<rect x="1092" y="711.5" width="8.5" height="33" fill="none" stroke="#ff1010" stroke-width="1.5" />
<rect x="1090.5" y="528.5" width="1.5" height="56.5" fill="none" stroke="#3a9ad0" stroke-width="1.5" />
<rect x="1089" y="585" width="3" height="48.5" fill="none" stroke="#3a9ad0" stroke-width="1.5" />
<text x="1109" y="305.73" font-size="7.5" fill="#ff1010" text-anchor="middle" >1.1</text>
<text x="1109" y="417.73" font-size="7.5" fill="#ff1010" text-anchor="middle" >4.9</text>
<text x="1109" y="498.73" font-size="7.5" fill="#ff1010" text-anchor="middle" >0.7</text>
<text x="1109" y="660.73" font-size="7.5" fill="#ff1010" text-anchor="middle" >0.4</text>
<text x="1109" y="699.73" font-size="7.5" fill="#ff1010" text-anchor="middle" >9.6</text>
<text x="1109" y="734.73" font-size="7.5" fill="#ff1010" text-anchor="middle" >3.4</text>
<text x="1073" y="562.73" font-size="7.5" fill="#3a9ad0" text-anchor="middle" >-0.5</text>
<text x="1073" y="615.73" font-size="7.5" fill="#3a9ad0" text-anchor="middle" >-1.0</text>
<line x1="1125" y1="45" x2="1125" y2="763" stroke="#fff" stroke-width="2" />
<g clip-path="url(#hodc)">
<circle cx="1522" cy="312.8" r="49.75" fill="none" stroke="#7c7c7c" stroke-width="1" stroke-dasharray="4,3"/>
<circle cx="1522" cy="312.8" r="99.5" fill="none" stroke="#7c7c7c" stroke-width="1" stroke-dasharray="4,3"/>
<circle cx="1522" cy="312.8" r="149.25" fill="none" stroke="#7c7c7c" stroke-width="1" stroke-dasharray="4,3"/>
<circle cx="1522" cy="312.8" r="199" fill="none" stroke="#7c7c7c" stroke-width="1" stroke-dasharray="4,3"/>
<circle cx="1522" cy="312.8" r="248.75" fill="none" stroke="#7c7c7c" stroke-width="1" stroke-dasharray="4,3"/>
<circle cx="1522" cy="312.8" r="298.5" fill="none" stroke="#7c7c7c" stroke-width="1" stroke-dasharray="4,3"/>
<circle cx="1522" cy="312.8" r="348.25" fill="none" stroke="#7c7c7c" stroke-width="1" stroke-dasharray="4,3"/>
<circle cx="1522" cy="312.8" r="398" fill="none" stroke="#7c7c7c" stroke-width="1" stroke-dasharray="4,3"/>
<circle cx="1522" cy="312.8" r="447.75" fill="none" stroke="#7c7c7c" stroke-width="1" stroke-dasharray="4,3"/>
<circle cx="1522" cy="312.8" r="497.5" fill="none" stroke="#7c7c7c" stroke-width="1" stroke-dasharray="4,3"/>
<circle cx="1522" cy="312.8" r="547.25" fill="none" stroke="#7c7c7c" stroke-width="1" stroke-dasharray="4,3"/>
<circle cx="1522" cy="312.8" r="597" fill="none" stroke="#7c7c7c" stroke-width="1" stroke-dasharray="4,3"/>
<circle cx="1522" cy="312.8" r="646.75" fill="none" stroke="#7c7c7c" stroke-width="1" stroke-dasharray="4,3"/>
<circle cx="1522" cy="312.8" r="696.5" fill="none" stroke="#7c7c7c" stroke-width="1" stroke-dasharray="4,3"/>
<circle cx="1522" cy="312.8" r="746.25" fill="none" stroke="#7c7c7c" stroke-width="1" stroke-dasharray="4,3"/>
<circle cx="1522" cy="312.8" r="796" fill="none" stroke="#7c7c7c" stroke-width="1" stroke-dasharray="4,3"/>
</g>
<line x1="1124" y1="45" x2="1919" y2="45" stroke="#fff" stroke-width="2" />
<line x1="1918" y1="44" x2="1918" y2="582" stroke="#fff" stroke-width="2" />
<line x1="1522" y1="45" x2="1522" y2="581" stroke="#fff" stroke-width="2" />
<line x1="1125" y1="313" x2="1918" y2="313" stroke="#fff" stroke-width="2" />
<line x1="1124" y1="581" x2="1919" y2="581" stroke="#fff" stroke-width="2" />
<rect x="1527.5" y="258.55" width="12" height="10" fill="#000" />
<text x="1533.5" y="267.01" font-size="9.5" fill="#fff" text-anchor="middle" >10</text>
<text x="1533.5" y="366.51" font-size="9.5" fill="#fff" text-anchor="middle" >10</text>
<rect x="1527.5" y="208.8" width="12" height="10" fill="#000" />
<text x="1533.5" y="217.26" font-size="9.5" fill="#fff" text-anchor="middle" >20</text>
<text x="1533.5" y="416.26" font-size="9.5" fill="#fff" text-anchor="middle" >20</text>
<rect x="1527.5" y="159.05" width="12" height="10" fill="#000" />
<text x="1533.5" y="167.51" font-size="9.5" fill="#fff" text-anchor="middle" >30</text>
<text x="1533.5" y="466.01" font-size="9.5" fill="#fff" text-anchor="middle" >30</text>
<rect x="1527.5" y="109.3" width="12" height="10" fill="#000" />
<text x="1533.5" y="117.76" font-size="9.5" fill="#fff" text-anchor="middle" >40</text>
<text x="1533.5" y="515.76" font-size="9.5" fill="#fff" text-anchor="middle" >40</text>
<rect x="1527.5" y="59.55" width="12" height="10" fill="#000" />
<text x="1533.5" y="68.01" font-size="9.5" fill="#fff" text-anchor="middle" >50</text>
<text x="1533.5" y="565.51" font-size="9.5" fill="#fff" text-anchor="middle" >50</text>
<text x="1477.25" y="327.96" font-size="9.5" fill="#fff" text-anchor="middle" >10</text>
<text x="1573.75" y="327.96" font-size="9.5" fill="#fff" text-anchor="middle" >10</text>
<text x="1427.5" y="327.96" font-size="9.5" fill="#fff" text-anchor="middle" >20</text>
<text x="1623.5" y="327.96" font-size="9.5" fill="#fff" text-anchor="middle" >20</text>
<text x="1377.75" y="327.96" font-size="9.5" fill="#fff" text-anchor="middle" >30</text>
<text x="1673.25" y="327.96" font-size="9.5" fill="#fff" text-anchor="middle" >30</text>
<text x="1328" y="327.96" font-size="9.5" fill="#fff" text-anchor="middle" >40</text>
<text x="1723" y="327.96" font-size="9.5" fill="#fff" text-anchor="middle" >40</text>
<text x="1278.25" y="327.96" font-size="9.5" fill="#fff" text-anchor="middle" >50</text>
<text x="1772.75" y="327.96" font-size="9.5" fill="#fff" text-anchor="middle" >50</text>
<text x="1228.5" y="327.96" font-size="9.5" fill="#fff" text-anchor="middle" >60</text>
<text x="1822.5" y="327.96" font-size="9.5" fill="#fff" text-anchor="middle" >60</text>
<text x="1178.75" y="327.96" font-size="9.5" fill="#fff" text-anchor="middle" >70</text>
<text x="1872.25" y="327.96" font-size="9.5" fill="#fff" text-anchor="middle" >70</text>
<text x="1129" y="327.96" font-size="9.5" fill="#fff" text-anchor="middle" >80</text>
<text x="1922" y="327.96" font-size="9.5" fill="#fff" text-anchor="middle" >80</text>
<polyline points="1498.2,247.3 1483.4,190.7 1480.7,163.8 1483.4,142.3 1491.5,116.7 1506.3,95.2 1520,81.25 1537.5,70.75 1561.25,72.5 1570,87.5 1591.25,87.5 1612.5,93.75 1625,95 1608.75,144.5 1617,130" fill="none" stroke="#ff0000" stroke-width="2.5" stroke-linejoin="round" />
<polyline points="1617,130 1615,116.25 1625,75 1635,57.5 1636.25,51.25 1631.25,46.25" fill="none" stroke="#00ee00" stroke-width="2.5" stroke-linejoin="round" />
<polyline points="1498.2,247.3 1482.9,151.7" fill="none" stroke="#ff10ff" stroke-width="1" stroke-linejoin="round" />
<polyline points="1498,246.25 1648.75,133.75 1608.75,144.5" fill="none" stroke="#10d0e0" stroke-width="1" stroke-linejoin="round" />
<circle cx="1649.5" cy="133.7" r="4.3" fill="none" stroke="#fff" stroke-width="1.5"/>
<circle cx="1527.5" cy="54.5" r="4.3" fill="none" stroke="#fff" stroke-width="1.5"/>
<rect x="1620" y="68" width="7.5" height="7.5" fill="none" stroke="#e0a020" stroke-width="2" />
<circle cx="1648.3" cy="237" r="2.8" fill="none" stroke="#10b0e0" stroke-width="1"/>
<text x="1538.5" y="68.85" font-size="9.2" fill="#fff" text-anchor="start" >181/52 LM</text>
<text x="1631" y="78.85" font-size="9.2" fill="#e0a020" text-anchor="start" >202/54</text>
<text x="1656" y="147.05" font-size="9.2" fill="#fff" text-anchor="start" >215/44 RM</text>
<text x="1656" y="247.85" font-size="9.2" fill="#10b8f0" text-anchor="start" >UP=239/30</text>
<text x="1140" y="557.37" font-size="12" fill="#10e0e0" text-anchor="start" >Critical Angle = 62</text>
<line x1="1124" y1="582" x2="1124" y2="764" stroke="#fff" stroke-width="2" />
<line x1="1323.75" y1="582" x2="1323.75" y2="764" stroke="#fff" stroke-width="2" />
<line x1="1223.75" y1="583" x2="1223.75" y2="763" stroke="#1a4a90" stroke-width="2" />
<line x1="1126" y1="672.5" x2="1323" y2="672.5" stroke="#1a4a90" stroke-width="2" />
<line x1="1223.75" y1="672.5" x2="1253.3" y2="631.25" stroke="#fff" stroke-width="2.5" />
<circle cx="1224" cy="672.5" r="5" fill="none" stroke="#ff0000" stroke-width="1"/>
<circle cx="1217" cy="671.5" r="5" fill="none" stroke="#ff0000" stroke-width="1"/>
<circle cx="1210.6" cy="670.9" r="5" fill="none" stroke="#ff0000" stroke-width="1"/>
<circle cx="1204.4" cy="668.3" r="5" fill="none" stroke="#ff0000" stroke-width="1"/>
<circle cx="1198.1" cy="663.5" r="5" fill="none" stroke="#ff0000" stroke-width="1"/>
<circle cx="1192.9" cy="660.4" r="5" fill="none" stroke="#ff0000" stroke-width="1"/>
<circle cx="1187.7" cy="655.2" r="5" fill="none" stroke="#ff0000" stroke-width="1"/>
<circle cx="1184" cy="653" r="5" fill="none" stroke="#ff0000" stroke-width="1"/>
<circle cx="1182.5" cy="655.2" r="5" fill="none" stroke="#00ee00" stroke-width="1"/>
<circle cx="1179" cy="649" r="5" fill="none" stroke="#00ee00" stroke-width="1"/>
<circle cx="1178.3" cy="643.75" r="5" fill="none" stroke="#00ee00" stroke-width="1"/>
<circle cx="1177.3" cy="640.6" r="5" fill="none" stroke="#e0e000" stroke-width="1"/>
<circle cx="1177.3" cy="634.4" r="5" fill="none" stroke="#e0e000" stroke-width="1"/>
<circle cx="1178.3" cy="627" r="5" fill="none" stroke="#e0e000" stroke-width="1"/>
<circle cx="1181.5" cy="619.8" r="5" fill="none" stroke="#20c0d0" stroke-width="1"/>
<circle cx="1186.7" cy="612.9" r="5" fill="none" stroke="#20c0d0" stroke-width="1"/>
<circle cx="1192.5" cy="604.8" r="5" fill="none" stroke="#e020e0" stroke-width="1"/>
<text x="1318" y="593.35" font-size="9.2" fill="#fff" text-anchor="end" >69.0 deg</text>
<text x="1130" y="761.46" font-size="9.5" fill="#fff" text-anchor="start" >Storm Slinky</text>
<line x1="1324" y1="617.7" x2="1329" y2="617.7" stroke="#fff" stroke-width="1.5" />
<text x="1340.8" y="621.05" font-size="9.2" fill="#fff" text-anchor="middle" >600</text>
<line x1="1324" y1="655.6" x2="1329" y2="655.6" stroke="#fff" stroke-width="1.5" />
<text x="1340.8" y="658.95" font-size="9.2" fill="#fff" text-anchor="middle" >700</text>
<line x1="1324" y1="693.75" x2="1329" y2="693.75" stroke="#fff" stroke-width="1.5" />
<text x="1340.8" y="697.1" font-size="9.2" fill="#fff" text-anchor="middle" >800</text>
<line x1="1324" y1="730.6" x2="1329" y2="730.6" stroke="#fff" stroke-width="1.5" />
<text x="1340.8" y="733.95" font-size="9.2" fill="#fff" text-anchor="middle" >900</text>
<text x="1329.5" y="757.35" font-size="9.2" fill="#fff" text-anchor="middle" >0</text>
<text x="1369" y="757.15" font-size="9.2" fill="#fff" text-anchor="middle" >320</text>
<line x1="1369" y1="758" x2="1369" y2="763" stroke="#fff" stroke-width="1.5" />
<text x="1413.5" y="757.15" font-size="9.2" fill="#fff" text-anchor="middle" >330</text>
<line x1="1413.5" y1="758" x2="1413.5" y2="763" stroke="#fff" stroke-width="1.5" />
<text x="1459" y="757.15" font-size="9.2" fill="#fff" text-anchor="middle" >340</text>
<line x1="1459" y1="758" x2="1459" y2="763" stroke="#fff" stroke-width="1.5" />
<text x="1505" y="757.15" font-size="9.2" fill="#fff" text-anchor="middle" >350</text>
<line x1="1505" y1="758" x2="1505" y2="763" stroke="#fff" stroke-width="1.5" />
<polyline points="1371,593.3 1369.4,605.8 1386.7,617.7 1392.9,627 1386.7,640.6 1420,662.5 1425.2,672.9 1424.2,682.3 1438.75,696.9 1445,705.2 1443,712.5 1444,716.7 1440.8,725 1443,733.3 1453.3,741.7 1456.5,750 1460,764.6" fill="none" stroke="#ff0000" stroke-width="2" stroke-linejoin="round" />
<text x="1414.8" y="636.41" font-size="15.4" fill="#fff" text-anchor="middle" >ThetaE v.</text>
<text x="1414.8" y="654.61" font-size="15.4" fill="#fff" text-anchor="middle" >Pres</text>
<line x1="1522" y1="582" x2="1522" y2="764" stroke="#fff" stroke-width="2" />
<line x1="1720.5" y1="582" x2="1720.5" y2="764" stroke="#fff" stroke-width="2" />
<line x1="1523" y1="601.7" x2="1527" y2="601.7" stroke="#fff" stroke-width="1.5" />
<line x1="1716" y1="601.7" x2="1720" y2="601.7" stroke="#fff" stroke-width="1.5" />
<text x="1538.3" y="604.8" font-size="8.5" fill="#fff" text-anchor="middle" >14</text>
<line x1="1523" y1="624.9" x2="1527" y2="624.9" stroke="#fff" stroke-width="1.5" />
<line x1="1716" y1="624.9" x2="1720" y2="624.9" stroke="#fff" stroke-width="1.5" />
<text x="1538.3" y="628" font-size="8.5" fill="#fff" text-anchor="middle" >12</text>
<line x1="1523" y1="647.6" x2="1527" y2="647.6" stroke="#fff" stroke-width="1.5" />
<line x1="1716" y1="647.6" x2="1720" y2="647.6" stroke="#fff" stroke-width="1.5" />
<text x="1538.3" y="650.7" font-size="8.5" fill="#fff" text-anchor="middle" >10</text>
<line x1="1523" y1="670.6" x2="1527" y2="670.6" stroke="#fff" stroke-width="1.5" />
<line x1="1716" y1="670.6" x2="1720" y2="670.6" stroke="#fff" stroke-width="1.5" />
<text x="1538.3" y="673.7" font-size="8.5" fill="#fff" text-anchor="middle" >8</text>
<line x1="1523" y1="693.1" x2="1527" y2="693.1" stroke="#fff" stroke-width="1.5" />
<line x1="1716" y1="693.1" x2="1720" y2="693.1" stroke="#fff" stroke-width="1.5" />
<text x="1538.3" y="696.2" font-size="8.5" fill="#fff" text-anchor="middle" >6</text>
<line x1="1523" y1="715.7" x2="1527" y2="715.7" stroke="#fff" stroke-width="1.5" />
<line x1="1716" y1="715.7" x2="1720" y2="715.7" stroke="#fff" stroke-width="1.5" />
<text x="1538.3" y="718.8" font-size="8.5" fill="#fff" text-anchor="middle" >4</text>
<line x1="1523" y1="738.6" x2="1527" y2="738.6" stroke="#fff" stroke-width="1.5" />
<line x1="1716" y1="738.6" x2="1720" y2="738.6" stroke="#fff" stroke-width="1.5" />
<text x="1538.3" y="741.7" font-size="8.5" fill="#fff" text-anchor="middle" >2</text>
<line x1="1543.75" y1="583" x2="1543.75" y2="586" stroke="#fff" stroke-width="1.5" />
<line x1="1543.75" y1="759" x2="1543.75" y2="762" stroke="#fff" stroke-width="1.5" />
<line x1="1566.7" y1="583" x2="1566.7" y2="586" stroke="#fff" stroke-width="1.5" />
<line x1="1566.7" y1="759" x2="1566.7" y2="762" stroke="#fff" stroke-width="1.5" />
<line x1="1589.7" y1="583" x2="1589.7" y2="586" stroke="#fff" stroke-width="1.5" />
<line x1="1589.7" y1="759" x2="1589.7" y2="762" stroke="#fff" stroke-width="1.5" />
<line x1="1612.7" y1="583" x2="1612.7" y2="586" stroke="#fff" stroke-width="1.5" />
<line x1="1612.7" y1="759" x2="1612.7" y2="762" stroke="#fff" stroke-width="1.5" />
<line x1="1635.6" y1="583" x2="1635.6" y2="586" stroke="#fff" stroke-width="1.5" />
<line x1="1635.6" y1="759" x2="1635.6" y2="762" stroke="#fff" stroke-width="1.5" />
<line x1="1658" y1="583" x2="1658" y2="586" stroke="#fff" stroke-width="1.5" />
<line x1="1658" y1="759" x2="1658" y2="762" stroke="#fff" stroke-width="1.5" />
<line x1="1681" y1="583" x2="1681" y2="586" stroke="#fff" stroke-width="1.5" />
<line x1="1681" y1="759" x2="1681" y2="762" stroke="#fff" stroke-width="1.5" />
<line x1="1703.9" y1="583" x2="1703.9" y2="586" stroke="#fff" stroke-width="1.5" />
<line x1="1703.9" y1="759" x2="1703.9" y2="762" stroke="#fff" stroke-width="1.5" />
<line x1="1555.8" y1="583" x2="1555.8" y2="762" stroke="#dddddd" stroke-width="1.5" stroke-dasharray="3,2" />
<line x1="1613.1" y1="583" x2="1613.1" y2="670" stroke="#a020a0" stroke-width="1.5" stroke-dasharray="3,2" />
<line x1="1681" y1="583" x2="1681" y2="670" stroke="#a020a0" stroke-width="1.5" stroke-dasharray="3,2" />
<text x="1559" y="597.22" font-size="8" fill="#fff" text-anchor="middle" >SR Wind</text>
<text x="1559" y="606.92" font-size="8" fill="#fff" text-anchor="middle" >v.</text>
<text x="1559" y="616.92" font-size="8" fill="#fff" text-anchor="middle" >Height</text>
<text x="1633.5" y="606.92" font-size="8" fill="#a020d0" text-anchor="middle" >Classic</text>
<text x="1633.5" y="616.92" font-size="8" fill="#a020d0" text-anchor="middle" >Supercell</text>
<line x1="1619.9" y1="635" x2="1619.9" y2="660" stroke="#a030f0" stroke-width="2" />
<line x1="1563" y1="692" x2="1563" y2="716.8" stroke="#4a90f0" stroke-width="2" />
<line x1="1574" y1="738" x2="1574" y2="762" stroke="#a00000" stroke-width="2" />
<polyline points="1572.2,582.7 1590.8,591.4 1612.7,596.4 1623.6,599 1624.7,605.6 1613.8,610 1607.6,618.75 1618.1,625.3 1634.5,631.9 1626.4,639.5 1623.6,646.1 1616,652.7 1608.3,661.4 1605,669 1596.3,678.9 1588.6,687 1572.2,695.3 1563.4,700.8 1555.8,712.8 1550.3,718.3 1537.2,722.7 1536.1,726.4 1541.6,730.3 1537.2,736.9 1547,743.4 1567.8,746.7 1587.5,750 1596.3,753.3 1600.6,757.7 1608.3,762" fill="none" stroke="#ff0000" stroke-width="2" stroke-linejoin="round" />
<line x1="1721" y1="608.5" x2="1918" y2="608.5" stroke="#fff" stroke-width="2" />
<text x="1819.4" y="602.31" font-size="13.2" fill="#fff" text-anchor="middle" >Psbl Haz. Type</text>
<text x="1819.4" y="686.06" font-size="12.5" fill="#ff0000" text-anchor="middle" >TOR</text>
<line x1="1124" y1="763" x2="1919" y2="763" stroke="#fff" stroke-width="2" />
<rect x="2.5" y="787.5" width="479.5" height="250" fill="none" stroke="#3a9cd4" stroke-width="3" />
<rect x="482" y="787.5" width="478.5" height="250" fill="none" stroke="#3a9cd4" stroke-width="3" />
<rect x="960.5" y="787.5" width="479" height="250" fill="none" stroke="#3a9cd4" stroke-width="3" />
<rect x="1439.5" y="787.5" width="478.5" height="250" fill="none" stroke="#3a9cd4" stroke-width="3" />
<text x="62.3" y="800.3" font-size="14" fill="#fff" text-anchor="middle" >PCL</text>
<text x="121.5" y="800.3" font-size="14" fill="#fff" text-anchor="middle" >CAPE</text>
<text x="180.4" y="800.3" font-size="14" fill="#fff" text-anchor="middle" >CINH</text>
<text x="240" y="800.3" font-size="14" fill="#fff" text-anchor="middle" >LCL</text>
<text x="298.5" y="800.3" font-size="14" fill="#fff" text-anchor="middle" >LI</text>
<text x="357.7" y="800.3" font-size="14" fill="#fff" text-anchor="middle" >LFC</text>
<text x="416.7" y="800.3" font-size="14" fill="#fff" text-anchor="middle" >EL</text>
<line x1="4" y1="802.5" x2="481" y2="802.5" stroke="#fff" stroke-width="1.5" />
<text x="62.3" y="819.2" font-size="14" fill="#fff" text-anchor="middle" >SFC</text>
<text x="121.5" y="819.2" font-size="14" fill="#fff" text-anchor="middle" >1154</text>
<text x="180.4" y="819.2" font-size="14" fill="#fff" text-anchor="middle" >-2</text>
<text x="240" y="819.2" font-size="14" fill="#fff" text-anchor="middle" >569</text>
<text x="298.5" y="819.2" font-size="14" fill="#fff" text-anchor="middle" >-6</text>
<text x="357.7" y="819.2" font-size="14" fill="#fff" text-anchor="middle" >687</text>
<text x="416.7" y="819.2" font-size="14" fill="#fff" text-anchor="middle" >11696</text>
<text x="62.3" y="832.2" font-size="14" fill="#fff" text-anchor="middle" >ML</text>
<text x="121.5" y="832.2" font-size="14" fill="#fff" text-anchor="middle" >938</text>
<text x="180.4" y="832.2" font-size="14" fill="#fff" text-anchor="middle" >-4</text>
<text x="240" y="832.2" font-size="14" fill="#fff" text-anchor="middle" >697</text>
<text x="298.5" y="832.2" font-size="14" fill="#fff" text-anchor="middle" >-5</text>
<text x="357.7" y="832.2" font-size="14" fill="#fff" text-anchor="middle" >1652</text>
<text x="416.7" y="832.2" font-size="14" fill="#fff" text-anchor="middle" >11545</text>
<text x="62.3" y="845.2" font-size="14" fill="#fff" text-anchor="middle" >FCST</text>
<text x="121.5" y="845.2" font-size="14" fill="#fff" text-anchor="middle" >1857</text>
<text x="180.4" y="845.2" font-size="14" fill="#fff" text-anchor="middle" >0</text>
<text x="240" y="845.2" font-size="14" fill="#fff" text-anchor="middle" >1174</text>
<text x="298.5" y="845.2" font-size="14" fill="#fff" text-anchor="middle" >-7</text>
<text x="357.7" y="845.2" font-size="14" fill="#fff" text-anchor="middle" >1174</text>
<text x="416.7" y="845.2" font-size="14" fill="#fff" text-anchor="middle" >11987</text>
<text x="62.3" y="858.2" font-size="14" fill="#00e8e8" text-anchor="middle" >MU</text>
<text x="121.5" y="858.2" font-size="14" fill="#fff" text-anchor="middle" >1154</text>
<text x="180.4" y="858.2" font-size="14" fill="#00ff00" text-anchor="middle" >-2</text>
<text x="240" y="858.2" font-size="14" fill="#fff" text-anchor="middle" >569</text>
<text x="298.5" y="858.2" font-size="14" fill="#fff" text-anchor="middle" >-6</text>
<text x="357.7" y="858.2" font-size="14" fill="#fff" text-anchor="middle" >687</text>
<text x="416.7" y="858.2" font-size="14" fill="#fff" text-anchor="middle" >11696</text>
<rect x="6" y="847.5" width="469.5" height="14" fill="none" stroke="#6e4a20" stroke-width="1" />
<line x1="4" y1="863.5" x2="481" y2="863.5" stroke="#fff" stroke-width="1.5" />
<text x="9.3" y="881" font-size="14" fill="#fff" text-anchor="start" >PW = 1.46in</text>
<text x="168.2" y="881" font-size="14" fill="#fff" text-anchor="start" >K = 36</text>
<text x="286.1" y="881" font-size="14" fill="#fff" text-anchor="start" >WNDG = 0.0</text>
<text x="9.3" y="894" font-size="14" fill="#fff" text-anchor="start" >MeanW = 13.1g/kg</text>
<text x="168.2" y="894" font-size="14" fill="#fff" text-anchor="start" >TT = 53</text>
<text x="286.1" y="894" font-size="14" fill="#fff" text-anchor="start" >TEI = 16</text>
<text x="9.3" y="907" font-size="14" fill="#fff" text-anchor="start" >LowRH = 87%</text>
<text x="168.2" y="907" font-size="14" fill="#fff" text-anchor="start" >ConvT = 76F</text>
<text x="286.1" y="907" font-size="14" fill="#fff" text-anchor="start" >3CAPE = 52</text>
<text x="9.3" y="920" font-size="14" fill="#fff" text-anchor="start" >MidRH = 80%</text>
<text x="168.2" y="920" font-size="14" fill="#fff" text-anchor="start" >maxT = 81F</text>
<text x="9.3" y="933" font-size="14" fill="#fff" text-anchor="start" >DCAPE = 937</text>
<text x="168.2" y="933" font-size="14" fill="#fff" text-anchor="start" >ESP = 0.0</text>
<text x="9.3" y="946" font-size="14" fill="#fff" text-anchor="start" >DownT = 58F</text>
<text x="168.2" y="946" font-size="14" fill="#fff" text-anchor="start" >MMP = 0.95</text>
<text x="286.1" y="946" font-size="14" fill="#fff" text-anchor="start" >SigSvr = 27202 m3/s3</text>
<line x1="4" y1="948.3" x2="481" y2="948.3" stroke="#fff" stroke-width="1.5" />
<line x1="328.5" y1="948.3" x2="328.5" y2="1036" stroke="#fff" stroke-width="1.5" />
<text x="9.3" y="965.9" font-size="14" fill="#fff" text-anchor="start" >Sfc-3km AGL LR = 6.7 C/km</text>
<text x="9.3" y="978.9" font-size="14" fill="#fff" text-anchor="start" >3-6km AGL LR = 6.8 C/km</text>
<text x="9.3" y="991.9" font-size="14" fill="#fff" text-anchor="start" >850-500mb LR = 6.7 C/km</text>
<text x="9.3" y="1004.9" font-size="14" fill="#fff" text-anchor="start" >700-500mb LR = 7.2 C/km</text>
<text x="333" y="965.9" font-size="14" fill="#fff" text-anchor="start" >Supercell = 7.8</text>
<text x="333" y="978.9" font-size="14" fill="#ffff00" text-anchor="start" >STP (cin) = 2.0</text>
<text x="333" y="991.9" font-size="14" fill="#ffff00" text-anchor="start" >STP (fix) = 2.4</text>
<text x="333" y="1004.9" font-size="14" fill="#fff" text-anchor="start" >SHIP = 0.8</text>
<text x="623.1" y="802.5" font-size="14" fill="#fff" text-anchor="middle" >SRH (m2/s2)</text>
<text x="741.6" y="802.5" font-size="14" fill="#fff" text-anchor="middle" >Shear (kt)</text>
<text x="835.4" y="802.5" font-size="14" fill="#fff" text-anchor="middle" >MnWind</text>
<text x="923.9" y="802.5" font-size="14" fill="#fff" text-anchor="middle" >SRW</text>
<line x1="484" y1="805.3" x2="960" y2="805.3" stroke="#fff" stroke-width="1.5" />
<text x="488.2" y="820.8" font-size="14" fill="#fff" text-anchor="start" >SFC-1km</text>
<text x="670.5" y="822.3" font-size="14" fill="#fff" text-anchor="end" >323</text>
<text x="764.8" y="822.3" font-size="14" fill="#fff" text-anchor="end" >35</text>
<text x="858.5" y="822.3" font-size="14" fill="#fff" text-anchor="end" >170/33</text>
<text x="952.6" y="822.3" font-size="14" fill="#fff" text-anchor="end" >84/32</text>
<text x="488.2" y="833.7" font-size="14" fill="#fff" text-anchor="start" >SFC-3km</text>
<text x="670.5" y="835.2" font-size="14" fill="#fff" text-anchor="end" >344</text>
<text x="764.8" y="835.2" font-size="14" fill="#fff" text-anchor="end" >34</text>
<text x="858.5" y="835.2" font-size="14" fill="#fff" text-anchor="end" >190/38</text>
<text x="952.6" y="835.2" font-size="14" fill="#fff" text-anchor="end" >95/19</text>
<text x="488.2" y="846.7" font-size="14" fill="#fff" text-anchor="start" >Eff Inflow Layer</text>
<text x="670.5" y="848.2" font-size="14" fill="#fff" text-anchor="end" >338</text>
<text x="764.8" y="848.2" font-size="14" fill="#fff" text-anchor="end" >30</text>
<text x="858.5" y="848.2" font-size="14" fill="#fff" text-anchor="end" >189/38</text>
<text x="952.6" y="848.2" font-size="14" fill="#fff" text-anchor="end" >95/20</text>
<text x="488.2" y="866.6" font-size="14" fill="#fff" text-anchor="start" >SFC-6km</text>
<text x="764.8" y="868.1" font-size="14" fill="#fff" text-anchor="end" >56</text>
<text x="858.5" y="868.1" font-size="14" fill="#fff" text-anchor="end" >196/43</text>
<text x="952.6" y="868.1" font-size="14" fill="#fff" text-anchor="end" >112/15</text>
<text x="488.2" y="879.6" font-size="14" fill="#fff" text-anchor="start" >SFC-8km</text>
<text x="764.8" y="881.1" font-size="14" fill="#fff" text-anchor="end" >71</text>
<text x="858.5" y="881.1" font-size="14" fill="#fff" text-anchor="end" >197/47</text>
<text x="952.6" y="881.1" font-size="14" fill="#fff" text-anchor="end" >125/15</text>
<text x="488.2" y="892.6" font-size="14" fill="#fff" text-anchor="start" >LCL-EL (Cloud Layer)</text>
<text x="764.8" y="894.1" font-size="14" fill="#fff" text-anchor="end" >73</text>
<text x="858.5" y="894.1" font-size="14" fill="#fff" text-anchor="end" >202/54</text>
<text x="952.6" y="894.1" font-size="14" fill="#fff" text-anchor="end" >160/15</text>
<text x="488.2" y="905.6" font-size="14" fill="#fff" text-anchor="start" >Eff Shear (EBWD)</text>
<text x="764.8" y="907.1" font-size="14" fill="#fff" text-anchor="end" >55</text>
<text x="858.5" y="907.1" font-size="14" fill="#fff" text-anchor="end" >196/43</text>
<text x="952.6" y="907.1" font-size="14" fill="#fff" text-anchor="end" >111/15</text>
<text x="488.2" y="925.2" font-size="14" fill="#fff" text-anchor="start" >BRN Shear =</text>
<text x="764.8" y="926.7" font-size="14" fill="#fff" text-anchor="end" >84 m2/s2</text>
<text x="488.2" y="938.3" font-size="14" fill="#fff" text-anchor="start" >4-6km SR Wind =</text>
<text x="764.8" y="939.8" font-size="14" fill="#fff" text-anchor="end" >169/16 kt</text>
<text x="488.2" y="958.1" font-size="14" fill="#fff" text-anchor="start" >...Storm Motion Vectors...</text>
<text x="488.2" y="971.1" font-size="14" fill="#fff" text-anchor="start" >Bunkers Right =</text>
<text x="764.8" y="971.1" font-size="14" fill="#10a0d8" text-anchor="end" >215/44 kt</text>
<text x="488.2" y="984.1" font-size="14" fill="#fff" text-anchor="start" >Bunkers Left =</text>
<text x="764.8" y="984.1" font-size="14" fill="#e05050" text-anchor="end" >181/52 kt</text>
<text x="488.2" y="997.1" font-size="14" fill="#fff" text-anchor="start" >Corfidi Downshear =</text>
<text x="764.8" y="997.1" font-size="14" fill="#fff" text-anchor="end" >216/84 kt</text>
<text x="488.2" y="1010.1" font-size="14" fill="#fff" text-anchor="start" >Corfidi Upshear =</text>
<text x="764.8" y="1011.6" font-size="14" fill="#fff" text-anchor="end" >239/30 kt</text>
<path d="M859.5,951.5 L853,975 M853,975 L845,970 M853.5,973 L845.5,968 M854,971 L846,966" fill="none" stroke="#c01818" stroke-width="1"/>
<path d="M859.5,951.5 L849,973 M849,973 L840,969 M850,971 L841,967 M851,968.5 L842,964.5 M852,966 L843,962" fill="none" stroke="#1e6fd0" stroke-width="1"/>
<text x="858.8" y="993.22" font-size="13.5" fill="#1e78e0" text-anchor="middle" >1km &amp; 6km AGL</text>
<text x="858.8" y="1008.92" font-size="13.5" fill="#1e78e0" text-anchor="middle" >Wind Barbs</text>
<text x="1200" y="810.34" font-size="22.6" fill="#fff" text-anchor="middle" >SARS - Sounding Analogue System</text>
<line x1="962" y1="816.5" x2="1438" y2="816.5" stroke="#fff" stroke-width="1.5" />
<line x1="1200.5" y1="816.5" x2="1200.5" y2="1036" stroke="#fff" stroke-width="1.5" />
<text x="1078.9" y="833.49" font-size="14.5" fill="#fff" text-anchor="middle" letter-spacing="1.9">SUPERCELL</text>
<text x="1315.9" y="833.49" font-size="14.5" fill="#fff" text-anchor="middle" letter-spacing="1.9">SGFNT HAIL</text>
<text x="966.1" y="849.89" font-size="14.5" fill="#ff0000" text-anchor="start" >04051923.GFK</text>
<text x="1141.4" y="849.89" font-size="14.5" fill="#ff0000" text-anchor="start" >SIG</text>
<text x="966.1" y="862.89" font-size="14.5" fill="#10a0f0" text-anchor="start" >00110822.TUP</text>
<text x="1141.4" y="862.89" font-size="14.5" fill="#10a0f0" text-anchor="start" >WEAK</text>
<text x="966.1" y="875.89" font-size="14.5" fill="#10a0f0" text-anchor="start" >00102900.JCT</text>
<text x="1141.4" y="875.89" font-size="14.5" fill="#10a0f0" text-anchor="start" >WEAK</text>
<text x="1316" y="899.31" font-size="14.3" fill="#fff" text-anchor="middle" >No Quality Matches</text>
<text x="1078.9" y="1017.89" font-size="14.5" fill="#ff20ff" text-anchor="middle" >(22 loose matches)</text>
<text x="1078.9" y="1033.99" font-size="14.5" fill="#ff20ff" text-anchor="middle" >SARS: 77% TOR</text>
<text x="1316" y="1017.89" font-size="14.5" fill="#fff" text-anchor="middle" >(10 loose matches)</text>
<text x="1316" y="1033.99" font-size="14.5" fill="#fff" text-anchor="middle" >SARS: 20% SIG</text>
<line x1="1441" y1="1018.1" x2="1916" y2="1018.1" stroke="#1f5fa8" stroke-width="2" stroke-dasharray="5,3" />
<text x="1444" y="1027.06" font-size="12.5" fill="#fff" text-anchor="start" >0</text>
<line x1="1441" y1="998.61" x2="1916" y2="998.61" stroke="#1f5fa8" stroke-width="2" stroke-dasharray="5,3" />
<text x="1444" y="1007.57" font-size="12.5" fill="#fff" text-anchor="start" >1</text>
<line x1="1441" y1="979.12" x2="1916" y2="979.12" stroke="#1f5fa8" stroke-width="2" stroke-dasharray="5,3" />
<text x="1444" y="988.08" font-size="12.5" fill="#fff" text-anchor="start" >2</text>
<line x1="1441" y1="959.63" x2="1916" y2="959.63" stroke="#1f5fa8" stroke-width="2" stroke-dasharray="5,3" />
<text x="1444" y="968.59" font-size="12.5" fill="#fff" text-anchor="start" >3</text>
<line x1="1441" y1="940.14" x2="1916" y2="940.14" stroke="#1f5fa8" stroke-width="2" stroke-dasharray="5,3" />
<text x="1444" y="949.1" font-size="12.5" fill="#fff" text-anchor="start" >4</text>
<line x1="1441" y1="920.65" x2="1916" y2="920.65" stroke="#1f5fa8" stroke-width="2" stroke-dasharray="5,3" />
<text x="1444" y="929.61" font-size="12.5" fill="#fff" text-anchor="start" >5</text>
<line x1="1441" y1="901.16" x2="1916" y2="901.16" stroke="#1f5fa8" stroke-width="2" stroke-dasharray="5,3" />
<text x="1444" y="910.12" font-size="12.5" fill="#fff" text-anchor="start" >6</text>
<line x1="1441" y1="881.67" x2="1916" y2="881.67" stroke="#1f5fa8" stroke-width="2" stroke-dasharray="5,3" />
<text x="1444" y="890.63" font-size="12.5" fill="#fff" text-anchor="start" >7</text>
<line x1="1441" y1="862.18" x2="1916" y2="862.18" stroke="#1f5fa8" stroke-width="2" stroke-dasharray="5,3" />
<text x="1444" y="871.14" font-size="12.5" fill="#fff" text-anchor="start" >8</text>
<line x1="1441" y1="842.69" x2="1916" y2="842.69" stroke="#1f5fa8" stroke-width="2" stroke-dasharray="5,3" />
<text x="1444" y="851.65" font-size="12.5" fill="#fff" text-anchor="start" >9</text>
<line x1="1441" y1="823.2" x2="1916" y2="823.2" stroke="#1f5fa8" stroke-width="2" stroke-dasharray="5,3" />
<text x="1444" y="832.16" font-size="12.5" fill="#fff" text-anchor="start" >10</text>
<line x1="1441" y1="803.71" x2="1916" y2="803.71" stroke="#1f5fa8" stroke-width="2" stroke-dasharray="5,3" />
<text x="1444" y="812.67" font-size="12.5" fill="#fff" text-anchor="start" >11</text>
<line x1="1441" y1="982.9" x2="1916" y2="982.9" stroke="#dddddd" stroke-width="2" />
<line x1="1507.8" y1="803.5" x2="1507.8" y2="856.6" stroke="#00ff00" stroke-width="2" />
<line x1="1507.8" y1="970.9" x2="1507.8" y2="999.5" stroke="#00ff00" stroke-width="2" />
<rect x="1490.7" y="856.6" width="34.5" height="114.3" fill="none" stroke="#00ff00" stroke-width="2" />
<line x1="1490.7" y1="916.5" x2="1525.2" y2="916.5" stroke="#00ff00" stroke-width="2" />
<line x1="1576" y1="854.5" x2="1576" y2="933.1" stroke="#00ff00" stroke-width="2" />
<line x1="1576" y1="1002.8" x2="1576" y2="1019.9" stroke="#00ff00" stroke-width="2" />
<rect x="1558.9" y="933.1" width="33.9" height="69.7" fill="none" stroke="#00ff00" stroke-width="2" />
<line x1="1558.9" y1="974.5" x2="1592.8" y2="974.5" stroke="#00ff00" stroke-width="2" />
<line x1="1643.9" y1="910.7" x2="1643.9" y2="949" stroke="#00ff00" stroke-width="2" />
<line x1="1643.9" y1="1011" x2="1643.9" y2="1023.7" stroke="#00ff00" stroke-width="2" />
<rect x="1627" y="949" width="34" height="62" fill="none" stroke="#00ff00" stroke-width="2" />
<line x1="1627" y1="988.8" x2="1661" y2="988.8" stroke="#00ff00" stroke-width="2" />
<line x1="1712.8" y1="932.4" x2="1712.8" y2="970.9" stroke="#00ff00" stroke-width="2" />
<line x1="1712.8" y1="1016.9" x2="1712.8" y2="1023.7" stroke="#00ff00" stroke-width="2" />
<rect x="1696" y="970.9" width="33.9" height="46" fill="none" stroke="#00ff00" stroke-width="2" />
<line x1="1696" y1="998.7" x2="1729.9" y2="998.7" stroke="#00ff00" stroke-width="2" />
<line x1="1781" y1="948.5" x2="1781" y2="983.4" stroke="#00ff00" stroke-width="2" />
<line x1="1781" y1="1020.7" x2="1781" y2="1023.7" stroke="#00ff00" stroke-width="2" />
<rect x="1763.8" y="983.4" width="34.2" height="37.3" fill="none" stroke="#00ff00" stroke-width="2" />
<line x1="1763.8" y1="1006.6" x2="1798" y2="1006.6" stroke="#00ff00" stroke-width="2" />
<line x1="1848.6" y1="988.5" x2="1848.6" y2="1009.2" stroke="#00ff00" stroke-width="2" />
<line x1="1848.6" y1="1023" x2="1848.6" y2="1023" stroke="#00ff00" stroke-width="2" />
<rect x="1832" y="1009.2" width="34" height="13.8" fill="none" stroke="#00ff00" stroke-width="2" />
<line x1="1832" y1="1019.9" x2="1866" y2="1019.9" stroke="#00ff00" stroke-width="2" />
<text x="1507.8" y="1037.96" font-size="9.5" fill="#fff" text-anchor="middle" >EF4+</text>
<text x="1576" y="1037.96" font-size="9.5" fill="#fff" text-anchor="middle" >EF3</text>
<text x="1644" y="1037.96" font-size="9.5" fill="#fff" text-anchor="middle" >EF2</text>
<text x="1713" y="1037.96" font-size="9.5" fill="#fff" text-anchor="middle" >EF1</text>
<text x="1781" y="1037.96" font-size="9.5" fill="#fff" text-anchor="middle" >EF0</text>
<text x="1849" y="1037.96" font-size="9.5" fill="#fff" text-anchor="middle" >NONTOR</text>
<text x="1680.9" y="801.53" font-size="17.1" fill="#fff" text-anchor="middle" >Effective Layer STP (with CIN)</text>
<rect x="1679.5" y="804.5" width="233.5" height="103.5" fill="#000" stroke="#fff" stroke-width="2" />
<line x1="1680" y1="832.8" x2="1913" y2="832.8" stroke="#fff" stroke-width="2" />
<text x="1682.2" y="818.15" font-size="12.2" fill="#fff" text-anchor="start" >Prob EF2+ torn with supercell</text>
<text x="1682.2" y="831.15" font-size="12.2" fill="#fff" text-anchor="start" >Sample CLIMO = .15 sigtor</text>
<text x="1682.5" y="844.37" font-size="12" fill="#fff" text-anchor="start" >based on CAPE:</text>
<text x="1855" y="844.37" font-size="12" fill="#fff" text-anchor="start" >0.16</text>
<text x="1682.5" y="856.37" font-size="12" fill="#ffff00" text-anchor="start" >based on LCL:</text>
<text x="1855" y="856.37" font-size="12" fill="#ffff00" text-anchor="start" >0.19</text>
<text x="1682.5" y="868.37" font-size="12" fill="#ffff00" text-anchor="start" >based on ESRH:</text>
<text x="1855" y="868.37" font-size="12" fill="#ffff00" text-anchor="start" >0.2</text>
<text x="1682.5" y="880.37" font-size="12" fill="#ffff00" text-anchor="start" >based on EBWD:</text>
<text x="1855" y="880.37" font-size="12" fill="#ffff00" text-anchor="start" >0.19</text>
<text x="1682.5" y="892.37" font-size="12" fill="#fff" text-anchor="start" >based on STPC:</text>
<text x="1855" y="892.37" font-size="12" fill="#fff" text-anchor="start" >0.17</text>
<text x="1682.5" y="904.37" font-size="12" fill="#ffff00" text-anchor="start" >based on STP_fixed:</text>
<text x="1855" y="904.37" font-size="12" fill="#ffff00" text-anchor="start" >0.25</text>
</svg></body></html>
